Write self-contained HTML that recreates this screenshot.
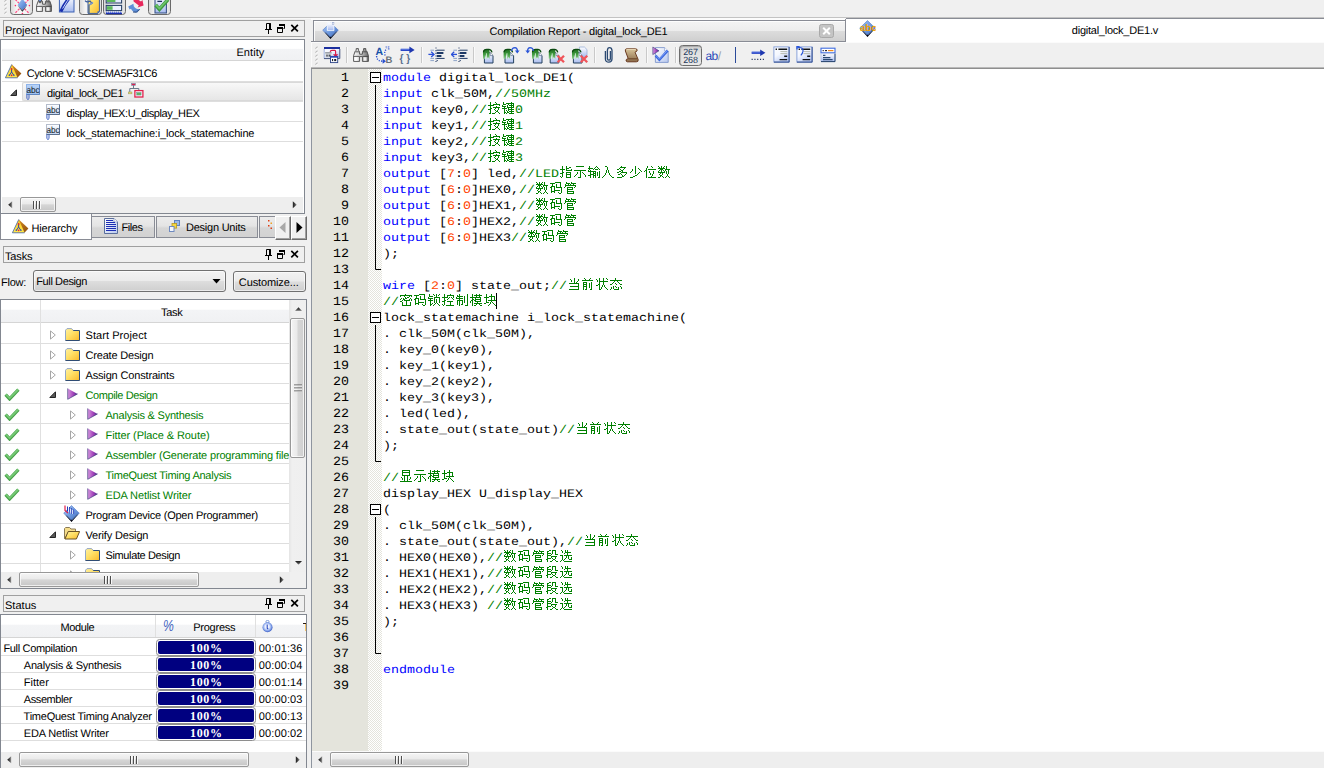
<!DOCTYPE html>
<html><head><meta charset="utf-8"><title>Quartus II</title>
<style>
html,body{margin:0;padding:0;background:#f0f0f0;}
body{width:1324px;height:768px;overflow:hidden;font-family:"Liberation Sans",sans-serif;font-size:11px;color:#000;text-rendering:geometricPrecision;}
#root{position:relative;width:1324px;height:768px;overflow:hidden;background:#f0f0f0;}
#root div,#root span.t,#root svg.i{position:absolute;box-sizing:border-box;}
.t{white-space:pre;line-height:14px;height:14px;font-size:11px;}
.hdr{background:linear-gradient(#fff 0,#fff 42%,#f3f4f6 46%,#f0f1f3 100%);border-bottom:1px solid #d5d5d5;}
.frame{border:1px solid #828790;background:#fff;}
.title{border:1px solid #a0a0a0;background:#f0f0f0;}
.sep{background:#dcdcdc;height:1px;}
.vsep{background:#e2e2e2;width:1px;}
.thumb{border:1px solid #989898;border-radius:2px;background:linear-gradient(#f5f5f5 0,#eaeaea 46%,#d6d6d6 52%,#c6c6c6 100%);box-shadow:inset 0 0 0 1px rgba(255,255,255,.7);}
.vthumb{border:1px solid #989898;border-radius:2px;background:linear-gradient(90deg,#f4f4f4 0,#e9e9e9 48%,#d6d6d6 52%,#d0d0d0 100%);box-shadow:inset 0 0 0 1px rgba(255,255,255,.7);}
.code{font-family:"Liberation Mono",monospace;font-size:13.333px;line-height:16px;height:16px;white-space:pre;transform:scaleY(.86);transform-origin:0 11px;}
.sp{display:inline-block;height:1px;}
.cjr{height:16px;white-space:nowrap;line-height:0;font-size:0;}
.k{color:#0000ff}.c{color:#008000}.n{color:#ff4500}
.cj{width:14px;height:16px;vertical-align:top;fill:#008000;display:inline-block;}
.num{font-family:"Liberation Mono",monospace;font-size:13.333px;line-height:16px;height:16px;width:37px;text-align:right;left:312px;transform:scaleY(.95);transform-origin:0 11px;}

</style></head>
<body>
<svg width="0" height="0" style="position:absolute"><defs><path id="c0" d="M2 2h1v1h-1zM7 2h1v1h-1zM2 3h1v1h-1zM8 3h1v1h-1zM2 4h1v1h-1zM5 4h7v1h-7zM0 5h6v1h-6zM11 5h1v1h-1zM2 6h1v1h-1zM8 6h1v1h-1zM2 7h1v1h-1zM5 7h7v1h-7zM2 8h2v1h-2zM7 8h1v1h-1zM10 8h1v1h-1zM0 9h3v1h-3zM6 9h1v1h-1zM10 9h1v1h-1zM2 10h1v1h-1zM7 10h1v1h-1zM9 10h1v1h-1zM2 11h1v1h-1zM8 11h2v1h-2zM2 12h1v1h-1zM7 12h1v1h-1zM10 12h1v1h-1zM1 13h2v1h-2zM4 13h3v1h-3zM11 13h1v1h-1z"/><path id="c1" d="M1 2h1v1h-1zM9 2h1v1h-1zM1 3h1v1h-1zM4 3h8v1h-8zM1 4h3v1h-3zM6 4h1v1h-1zM9 4h1v1h-1zM11 4h1v1h-1zM0 5h1v1h-1zM5 5h1v1h-1zM7 5h5v1h-5zM0 6h4v1h-4zM5 6h1v1h-1zM9 6h1v1h-1zM11 6h1v1h-1zM2 7h1v1h-1zM5 7h7v1h-7zM0 8h5v1h-5zM6 8h1v1h-1zM9 8h1v1h-1zM2 9h1v1h-1zM6 9h6v1h-6zM2 10h1v1h-1zM4 10h1v1h-1zM6 10h1v1h-1zM9 10h1v1h-1zM2 11h1v1h-1zM5 11h1v1h-1zM7 11h5v1h-5zM2 12h2v1h-2zM5 12h2v1h-2zM9 12h1v1h-1zM2 13h1v1h-1zM4 13h1v1h-1zM7 13h5v1h-5z"/><path id="c2" d="M2 2h1v1h-1zM6 2h1v1h-1zM2 3h1v1h-1zM6 3h1v1h-1zM9 3h2v1h-2zM2 4h1v1h-1zM6 4h3v1h-3zM0 5h5v1h-5zM6 5h1v1h-1zM11 5h1v1h-1zM2 6h1v1h-1zM6 6h6v1h-6zM2 7h1v1h-1zM2 8h2v1h-2zM6 8h5v1h-5zM0 9h3v1h-3zM6 9h1v1h-1zM10 9h1v1h-1zM2 10h1v1h-1zM6 10h5v1h-5zM2 11h1v1h-1zM6 11h1v1h-1zM10 11h1v1h-1zM0 12h1v1h-1zM2 12h1v1h-1zM6 12h1v1h-1zM10 12h1v1h-1zM1 13h1v1h-1zM6 13h5v1h-5z"/><path id="c3" d="M2 2h8v1h-8zM0 6h12v1h-12zM6 7h1v1h-1zM3 8h1v1h-1zM6 8h1v1h-1zM8 8h1v1h-1zM3 9h1v1h-1zM6 9h1v1h-1zM9 9h1v1h-1zM2 10h1v1h-1zM6 10h1v1h-1zM10 10h1v1h-1zM1 11h1v1h-1zM6 11h1v1h-1zM11 11h1v1h-1zM0 12h1v1h-1zM6 12h1v1h-1zM11 12h1v1h-1zM4 13h3v1h-3z"/><path id="c4" d="M1 2h1v1h-1zM8 2h1v1h-1zM1 3h1v1h-1zM7 3h1v1h-1zM9 3h1v1h-1zM0 4h5v1h-5zM6 4h1v1h-1zM10 4h1v1h-1zM1 5h1v1h-1zM5 5h1v1h-1zM7 5h3v1h-3zM11 5h1v1h-1zM0 6h1v1h-1zM2 6h1v1h-1zM0 7h8v1h-8zM11 7h1v1h-1zM2 8h1v1h-1zM5 8h1v1h-1zM7 8h1v1h-1zM9 8h1v1h-1zM11 8h1v1h-1zM2 9h1v1h-1zM5 9h3v1h-3zM9 9h1v1h-1zM11 9h1v1h-1zM2 10h4v1h-4zM7 10h1v1h-1zM9 10h1v1h-1zM11 10h1v1h-1zM0 11h3v1h-3zM5 11h3v1h-3zM9 11h1v1h-1zM11 11h1v1h-1zM2 12h1v1h-1zM5 12h1v1h-1zM7 12h1v1h-1zM11 12h1v1h-1zM2 13h1v1h-1zM5 13h1v1h-1zM7 13h1v1h-1zM10 13h2v1h-2z"/><path id="c5" d="M3 2h2v1h-2zM5 3h1v1h-1zM5 4h1v1h-1zM5 5h1v1h-1zM4 6h1v1h-1zM6 6h1v1h-1zM4 7h1v1h-1zM6 7h1v1h-1zM4 8h1v1h-1zM6 8h1v1h-1zM3 9h1v1h-1zM7 9h1v1h-1zM3 10h1v1h-1zM7 10h1v1h-1zM2 11h1v1h-1zM8 11h1v1h-1zM1 12h1v1h-1zM9 12h1v1h-1zM0 13h1v1h-1zM10 13h2v1h-2z"/><path id="c6" d="M5 2h1v1h-1zM4 3h6v1h-6zM3 4h1v1h-1zM8 4h1v1h-1zM1 5h2v1h-2zM4 5h1v1h-1zM7 5h1v1h-1zM5 6h2v1h-2zM3 7h2v1h-2zM6 7h1v1h-1zM1 8h2v1h-2zM5 8h6v1h-6zM4 9h1v1h-1zM10 9h1v1h-1zM2 10h2v1h-2zM5 10h1v1h-1zM9 10h1v1h-1zM6 11h1v1h-1zM8 11h1v1h-1zM6 12h2v1h-2zM1 13h5v1h-5z"/><path id="c7" d="M5 2h1v1h-1zM5 3h1v1h-1zM5 4h1v1h-1zM8 4h1v1h-1zM2 5h1v1h-1zM5 5h1v1h-1zM9 5h1v1h-1zM2 6h1v1h-1zM5 6h1v1h-1zM10 6h1v1h-1zM1 7h1v1h-1zM5 7h1v1h-1zM11 7h1v1h-1zM0 8h1v1h-1zM5 8h1v1h-1zM9 8h1v1h-1zM5 9h1v1h-1zM8 9h1v1h-1zM7 10h1v1h-1zM5 11h2v1h-2zM3 12h2v1h-2zM0 13h3v1h-3z"/><path id="c8" d="M3 2h1v1h-1zM7 2h1v1h-1zM3 3h1v1h-1zM8 3h1v1h-1zM2 4h1v1h-1zM2 5h1v1h-1zM4 5h8v1h-8zM1 6h2v1h-2zM0 7h1v1h-1zM2 7h1v1h-1zM5 7h1v1h-1zM9 7h1v1h-1zM2 8h1v1h-1zM5 8h1v1h-1zM9 8h1v1h-1zM2 9h1v1h-1zM6 9h1v1h-1zM9 9h1v1h-1zM2 10h1v1h-1zM6 10h1v1h-1zM8 10h1v1h-1zM2 11h1v1h-1zM8 11h1v1h-1zM2 12h1v1h-1zM7 12h1v1h-1zM2 13h1v1h-1zM4 13h8v1h-8z"/><path id="c9" d="M0 2h1v1h-1zM3 2h1v1h-1zM6 2h1v1h-1zM8 2h1v1h-1zM1 3h1v1h-1zM3 3h1v1h-1zM5 3h1v1h-1zM8 3h1v1h-1zM0 4h7v1h-7zM8 4h1v1h-1zM2 5h3v1h-3zM7 5h5v1h-5zM1 6h1v1h-1zM3 6h1v1h-1zM5 6h1v1h-1zM7 6h1v1h-1zM10 6h1v1h-1zM0 7h1v1h-1zM3 7h1v1h-1zM6 7h1v1h-1zM8 7h1v1h-1zM10 7h1v1h-1zM0 8h7v1h-7zM8 8h1v1h-1zM10 8h1v1h-1zM2 9h1v1h-1zM4 9h1v1h-1zM8 9h1v1h-1zM10 9h1v1h-1zM1 10h1v1h-1zM4 10h1v1h-1zM9 10h1v1h-1zM2 11h2v1h-2zM9 11h1v1h-1zM2 12h1v1h-1zM4 12h1v1h-1zM8 12h1v1h-1zM10 12h1v1h-1zM0 13h2v1h-2zM5 13h1v1h-1zM7 13h1v1h-1zM11 13h1v1h-1z"/><path id="c10" d="M5 2h6v1h-6zM0 3h5v1h-5zM10 3h1v1h-1zM2 4h1v1h-1zM6 4h1v1h-1zM10 4h1v1h-1zM2 5h1v1h-1zM6 5h1v1h-1zM10 5h1v1h-1zM1 6h4v1h-4zM6 6h1v1h-1zM10 6h1v1h-1zM0 7h2v1h-2zM4 7h1v1h-1zM6 7h6v1h-6zM1 8h1v1h-1zM4 8h1v1h-1zM11 8h1v1h-1zM1 9h1v1h-1zM4 9h1v1h-1zM11 9h1v1h-1zM1 10h1v1h-1zM4 10h6v1h-6zM11 10h1v1h-1zM1 11h4v1h-4zM11 11h1v1h-1zM1 12h1v1h-1zM4 12h1v1h-1zM8 12h1v1h-1zM11 12h1v1h-1zM9 13h2v1h-2z"/><path id="c11" d="M2 2h1v1h-1zM7 2h1v1h-1zM2 3h4v1h-4zM7 3h5v1h-5zM1 4h1v1h-1zM4 4h1v1h-1zM6 4h1v1h-1zM9 4h1v1h-1zM1 5h11v1h-11zM1 6h1v1h-1zM11 6h1v1h-1zM0 7h1v1h-1zM3 7h6v1h-6zM10 7h1v1h-1zM3 8h1v1h-1zM8 8h1v1h-1zM3 9h6v1h-6zM3 10h1v1h-1zM3 11h7v1h-7zM3 12h1v1h-1zM9 12h1v1h-1zM3 13h7v1h-7z"/><path id="c12" d="M6 2h1v1h-1zM2 3h1v1h-1zM6 3h1v1h-1zM10 3h1v1h-1zM3 4h1v1h-1zM6 4h1v1h-1zM10 4h1v1h-1zM3 5h1v1h-1zM6 5h1v1h-1zM9 5h1v1h-1zM6 6h1v1h-1zM8 6h1v1h-1zM1 7h10v1h-10zM10 8h1v1h-1zM10 9h1v1h-1zM2 10h9v1h-9zM10 11h1v1h-1zM10 12h1v1h-1zM1 13h10v1h-10z"/><path id="c13" d="M2 2h1v1h-1zM8 2h1v1h-1zM3 3h1v1h-1zM7 3h1v1h-1zM0 4h11v1h-11zM1 6h4v1h-4zM9 6h1v1h-1zM1 7h1v1h-1zM4 7h1v1h-1zM7 7h1v1h-1zM9 7h1v1h-1zM1 8h4v1h-4zM7 8h1v1h-1zM9 8h1v1h-1zM1 9h1v1h-1zM4 9h1v1h-1zM7 9h1v1h-1zM9 9h1v1h-1zM1 10h4v1h-4zM7 10h1v1h-1zM9 10h1v1h-1zM1 11h1v1h-1zM4 11h1v1h-1zM7 11h1v1h-1zM9 11h1v1h-1zM1 12h1v1h-1zM4 12h1v1h-1zM9 12h1v1h-1zM1 13h1v1h-1zM3 13h2v1h-2zM8 13h2v1h-2z"/><path id="c14" d="M3 2h1v1h-1zM7 2h1v1h-1zM10 2h1v1h-1zM0 3h1v1h-1zM3 3h1v1h-1zM7 3h1v1h-1zM11 3h1v1h-1zM1 4h1v1h-1zM3 4h1v1h-1zM7 4h1v1h-1zM1 5h1v1h-1zM3 5h9v1h-9zM3 6h1v1h-1zM7 6h1v1h-1zM3 7h1v1h-1zM7 7h1v1h-1zM2 8h2v1h-2zM7 8h1v1h-1zM0 9h2v1h-2zM3 9h1v1h-1zM6 9h1v1h-1zM8 9h1v1h-1zM3 10h1v1h-1zM6 10h1v1h-1zM8 10h1v1h-1zM3 11h1v1h-1zM5 11h1v1h-1zM9 11h1v1h-1zM3 12h1v1h-1zM5 12h1v1h-1zM10 12h1v1h-1zM3 13h2v1h-2zM11 13h1v1h-1z"/><path id="c15" d="M5 2h1v1h-1zM5 3h1v1h-1zM0 4h12v1h-12zM4 5h1v1h-1zM7 5h1v1h-1zM3 6h1v1h-1zM8 6h1v1h-1zM2 7h1v1h-1zM5 7h1v1h-1zM9 7h1v1h-1zM0 8h2v1h-2zM6 8h1v1h-1zM10 8h2v1h-2zM3 10h1v1h-1zM5 10h1v1h-1zM10 10h1v1h-1zM1 11h1v1h-1zM3 11h1v1h-1zM6 11h1v1h-1zM8 11h1v1h-1zM11 11h1v1h-1zM1 12h1v1h-1zM3 12h1v1h-1zM8 12h1v1h-1zM11 12h1v1h-1zM0 13h1v1h-1zM4 13h5v1h-5z"/><path id="c16" d="M5 2h1v1h-1zM0 3h12v1h-12zM0 4h1v1h-1zM4 4h1v1h-1zM9 4h1v1h-1zM11 4h1v1h-1zM5 5h1v1h-1zM7 5h2v1h-2zM1 6h1v1h-1zM3 6h1v1h-1zM5 6h2v1h-2zM10 6h1v1h-1zM0 7h1v1h-1zM3 7h2v1h-2zM9 7h1v1h-1zM11 7h1v1h-1zM2 8h1v1h-1zM4 8h6v1h-6zM11 8h1v1h-1zM0 9h2v1h-2zM6 9h1v1h-1zM2 10h1v1h-1zM6 10h1v1h-1zM10 10h1v1h-1zM2 11h1v1h-1zM6 11h1v1h-1zM10 11h1v1h-1zM2 12h1v1h-1zM6 12h1v1h-1zM10 12h1v1h-1zM2 13h9v1h-9z"/><path id="c17" d="M1 2h1v1h-1zM5 2h1v1h-1zM8 2h1v1h-1zM11 2h1v1h-1zM1 3h1v1h-1zM6 3h1v1h-1zM8 3h1v1h-1zM10 3h1v1h-1zM1 4h4v1h-4zM8 4h1v1h-1zM0 5h1v1h-1zM6 5h6v1h-6zM0 6h5v1h-5zM6 6h1v1h-1zM11 6h1v1h-1zM2 7h1v1h-1zM6 7h1v1h-1zM8 7h1v1h-1zM11 7h1v1h-1zM0 8h5v1h-5zM6 8h1v1h-1zM8 8h1v1h-1zM11 8h1v1h-1zM2 9h1v1h-1zM6 9h1v1h-1zM8 9h1v1h-1zM11 9h1v1h-1zM2 10h1v1h-1zM6 10h1v1h-1zM8 10h1v1h-1zM11 10h1v1h-1zM2 11h1v1h-1zM4 11h1v1h-1zM7 11h1v1h-1zM9 11h1v1h-1zM2 12h2v1h-2zM6 12h1v1h-1zM10 12h1v1h-1zM2 13h1v1h-1zM5 13h1v1h-1zM11 13h1v1h-1z"/><path id="c18" d="M2 2h1v1h-1zM8 2h1v1h-1zM2 3h1v1h-1zM5 3h7v1h-7zM2 4h1v1h-1zM5 4h1v1h-1zM11 4h1v1h-1zM0 5h6v1h-6zM7 5h1v1h-1zM9 5h1v1h-1zM11 5h1v1h-1zM2 6h1v1h-1zM6 6h1v1h-1zM10 6h1v1h-1zM2 7h1v1h-1zM5 7h1v1h-1zM11 7h1v1h-1zM2 8h2v1h-2zM0 9h3v1h-3zM5 9h6v1h-6zM2 10h1v1h-1zM8 10h1v1h-1zM2 11h1v1h-1zM8 11h1v1h-1zM0 12h1v1h-1zM2 12h1v1h-1zM8 12h1v1h-1zM1 13h1v1h-1zM4 13h8v1h-8z"/><path id="c19" d="M3 2h1v1h-1zM11 2h1v1h-1zM1 3h1v1h-1zM3 3h1v1h-1zM11 3h1v1h-1zM1 4h6v1h-6zM8 4h1v1h-1zM11 4h1v1h-1zM0 5h1v1h-1zM3 5h1v1h-1zM8 5h1v1h-1zM11 5h1v1h-1zM0 6h7v1h-7zM8 6h1v1h-1zM11 6h1v1h-1zM3 7h1v1h-1zM8 7h1v1h-1zM11 7h1v1h-1zM1 8h6v1h-6zM8 8h1v1h-1zM11 8h1v1h-1zM1 9h1v1h-1zM3 9h1v1h-1zM6 9h1v1h-1zM8 9h1v1h-1zM11 9h1v1h-1zM1 10h1v1h-1zM3 10h1v1h-1zM6 10h1v1h-1zM8 10h1v1h-1zM11 10h1v1h-1zM1 11h1v1h-1zM3 11h1v1h-1zM6 11h1v1h-1zM11 11h1v1h-1zM1 12h1v1h-1zM3 12h1v1h-1zM5 12h2v1h-2zM11 12h1v1h-1zM3 13h1v1h-1zM9 13h3v1h-3z"/><path id="c20" d="M2 2h1v1h-1zM6 2h1v1h-1zM9 2h1v1h-1zM2 3h1v1h-1zM4 3h8v1h-8zM2 4h1v1h-1zM6 4h1v1h-1zM9 4h1v1h-1zM0 5h11v1h-11zM2 6h1v1h-1zM5 6h1v1h-1zM10 6h1v1h-1zM2 7h2v1h-2zM5 7h6v1h-6zM1 8h2v1h-2zM4 8h2v1h-2zM10 8h1v1h-1zM0 9h1v1h-1zM2 9h1v1h-1zM5 9h6v1h-6zM0 10h1v1h-1zM2 10h1v1h-1zM7 10h1v1h-1zM2 11h1v1h-1zM4 11h8v1h-8zM2 12h1v1h-1zM6 12h1v1h-1zM9 12h1v1h-1zM2 13h1v1h-1zM4 13h2v1h-2zM10 13h2v1h-2z"/><path id="c21" d="M2 2h1v1h-1zM7 2h1v1h-1zM2 3h1v1h-1zM7 3h1v1h-1zM2 4h1v1h-1zM5 4h6v1h-6zM0 5h5v1h-5zM7 5h1v1h-1zM10 5h1v1h-1zM2 6h1v1h-1zM7 6h1v1h-1zM10 6h1v1h-1zM2 7h1v1h-1zM7 7h1v1h-1zM10 7h1v1h-1zM2 8h1v1h-1zM4 8h8v1h-8zM2 9h1v1h-1zM7 9h1v1h-1zM2 10h3v1h-3zM6 10h1v1h-1zM8 10h1v1h-1zM0 11h2v1h-2zM6 11h1v1h-1zM9 11h1v1h-1zM5 12h1v1h-1zM10 12h1v1h-1zM4 13h1v1h-1zM11 13h1v1h-1z"/><path id="c22" d="M2 2h8v1h-8zM2 3h1v1h-1zM9 3h1v1h-1zM2 4h8v1h-8zM2 5h1v1h-1zM9 5h1v1h-1zM2 6h1v1h-1zM9 6h1v1h-1zM2 7h8v1h-8zM4 8h1v1h-1zM7 8h1v1h-1zM1 9h1v1h-1zM4 9h1v1h-1zM7 9h1v1h-1zM10 9h1v1h-1zM2 10h1v1h-1zM4 10h1v1h-1zM7 10h1v1h-1zM10 10h1v1h-1zM2 11h1v1h-1zM4 11h1v1h-1zM7 11h1v1h-1zM9 11h1v1h-1zM4 12h1v1h-1zM7 12h1v1h-1zM0 13h12v1h-12z"/><path id="c23" d="M3 2h2v1h-2zM6 2h4v1h-4zM1 3h2v1h-2zM6 3h1v1h-1zM9 3h1v1h-1zM1 4h1v1h-1zM6 4h1v1h-1zM9 4h1v1h-1zM1 5h4v1h-4zM6 5h1v1h-1zM9 5h1v1h-1zM1 6h1v1h-1zM5 6h1v1h-1zM9 6h3v1h-3zM1 7h4v1h-4zM1 8h1v1h-1zM5 8h6v1h-6zM1 9h1v1h-1zM5 9h1v1h-1zM9 9h1v1h-1zM1 10h4v1h-4zM6 10h1v1h-1zM9 10h1v1h-1zM0 11h2v1h-2zM7 11h2v1h-2zM1 12h1v1h-1zM6 12h1v1h-1zM9 12h1v1h-1zM1 13h1v1h-1zM4 13h2v1h-2zM10 13h2v1h-2z"/><path id="c24" d="M1 2h1v1h-1zM5 2h1v1h-1zM7 2h1v1h-1zM2 3h1v1h-1zM5 3h1v1h-1zM7 3h1v1h-1zM2 4h1v1h-1zM5 4h6v1h-6zM4 5h1v1h-1zM7 5h1v1h-1zM7 6h1v1h-1zM0 7h3v1h-3zM4 7h8v1h-8zM2 8h1v1h-1zM6 8h1v1h-1zM8 8h1v1h-1zM2 9h1v1h-1zM6 9h1v1h-1zM8 9h1v1h-1zM11 9h1v1h-1zM2 10h1v1h-1zM5 10h1v1h-1zM8 10h1v1h-1zM11 10h1v1h-1zM2 11h1v1h-1zM4 11h1v1h-1zM9 11h3v1h-3zM1 12h1v1h-1zM3 12h1v1h-1zM0 13h1v1h-1zM4 13h8v1h-8z"/></defs></svg><svg width="0" height="0" style="position:absolute"><defs><linearGradient id="gFold" x1="0" y1="0" x2="1" y2="1"><stop offset="0" stop-color="#fff0a0"/><stop offset=".45" stop-color="#ffe066"/><stop offset="1" stop-color="#f9b82a"/></linearGradient><linearGradient id="gPlay" x1="0" y1="0" x2="1" y2="0"><stop offset="0" stop-color="#d79ae0"/><stop offset=".55" stop-color="#a444bb"/><stop offset="1" stop-color="#4a2a8a"/></linearGradient><linearGradient id="gDia" x1="0" y1="0" x2="1" y2="1"><stop offset="0" stop-color="#a9c6f2"/><stop offset=".5" stop-color="#6f9be0"/><stop offset="1" stop-color="#3c66b8"/></linearGradient><linearGradient id="gDoc" x1="0" y1="0" x2="1" y2="1"><stop offset="0" stop-color="#ffffff"/><stop offset="1" stop-color="#b8c8ee"/></linearGradient><linearGradient id="gBm" x1="0" y1="0" x2="0" y2="1"><stop offset="0" stop-color="#1c6a1c"/><stop offset=".5" stop-color="#3f9a3f"/><stop offset="1" stop-color="#9ad49a"/></linearGradient><linearGradient id="gPyr" x1="0" y1="0" x2="0" y2="1"><stop offset="0" stop-color="#f7c520"/><stop offset="1" stop-color="#ffe94d"/></linearGradient><linearGradient id="gPyr2" x1="0" y1="0" x2="1" y2="1"><stop offset="0" stop-color="#e89a20"/><stop offset="1" stop-color="#8a4a10"/></linearGradient><linearGradient id="gAbcS" x1="0" y1="0" x2="0" y2="1"><stop offset="0" stop-color="#b9d3f7"/><stop offset="1" stop-color="#9cc0f0"/></linearGradient><linearGradient id="gAbc" x1="0" y1="0" x2="0" y2="1"><stop offset="0" stop-color="#ffffff"/><stop offset="1" stop-color="#c4d6f2"/></linearGradient><radialGradient id="gClk" cx=".47" cy=".45" r=".56"><stop offset="0" stop-color="#ffffff"/><stop offset=".38" stop-color="#e6edff"/><stop offset=".72" stop-color="#86a4ea"/><stop offset="1" stop-color="#3558c0"/></radialGradient><linearGradient id="gBin" x1="0" y1="0" x2="1" y2="0"><stop offset="0" stop-color="#fafafa"/><stop offset=".5" stop-color="#c8c8c8"/><stop offset="1" stop-color="#6a6a6a"/></linearGradient><linearGradient id="gScr" x1="0" y1="0" x2="0" y2="1"><stop offset="0" stop-color="#d8c49a"/><stop offset="1" stop-color="#8a6a48"/></linearGradient><linearGradient id="gBlu" x1="0" y1="0" x2="0" y2="1"><stop offset="0" stop-color="#ffffff"/><stop offset="1" stop-color="#a8bcf0"/></linearGradient><linearGradient id="gLn" x1="0" y1="0" x2="0.6" y2="1"><stop offset="0" stop-color="#ffffff"/><stop offset=".5" stop-color="#f4f7ff"/><stop offset="1" stop-color="#b9c9f4"/></linearGradient><linearGradient id="gArL" x1="0" y1="0" x2="1" y2="0"><stop offset="0" stop-color="#1a1a1a"/><stop offset=".5" stop-color="#3c3c3c"/><stop offset="1" stop-color="#9a9a9a"/></linearGradient><linearGradient id="gArR" x1="0" y1="0" x2="1" y2="0"><stop offset="0" stop-color="#1a1a1a"/><stop offset=".5" stop-color="#4a4a4a"/><stop offset="1" stop-color="#9a9a9a"/></linearGradient><linearGradient id="gArD" x1="0" y1="0" x2="0" y2="1"><stop offset="0" stop-color="#1a1a1a"/><stop offset=".6" stop-color="#4a4a4a"/><stop offset="1" stop-color="#a0a0a0"/></linearGradient></defs></svg>
<div id="root">
<div style="left:0px;top:17px;width:1324px;height:1px;background:#c3c3c3"></div>
<div style="left:0px;top:18px;width:1324px;height:1px;background:#f8f8f8"></div>
<div style="left:311px;top:18px;width:534px;height:2px;background:#fcfcfc"></div>
<div class="title" style="left:3px;top:20px;width:302px;height:17px;"></div>
<span class="t" style="left:5px;top:24px;letter-spacing:-0.022px;">Project Navigator</span>
<svg class="i" style="left:264px;top:23px" width="38" height="12" viewBox="0 0 38 12"><path d="M2.5 0.5h4v6h-4z M1 6.5h7 M4.5 7v4" fill="none" stroke="#000" stroke-width="1"/><path d="M6 0.5v6" stroke="#000" stroke-width="2"/><path d="M15.5 1.5h5v4h-1" fill="none" stroke="#000" stroke-width="1"/><path d="M15 1h6v2h-6z" fill="#000"/><path d="M13.5 4.5h5v5h-5z" fill="#f0f0f0" stroke="#000" stroke-width="1"/><path d="M13 4h6v2h-6z" fill="#000"/><path d="M27.3 1.8l6.6 6.6 M33.9 1.8l-6.6 6.6" fill="none" stroke="#000" stroke-width="1.7"/></svg>
<div class="frame" style="left:0px;top:39px;width:305px;height:175px;"></div>
<div class="hdr" style="left:2px;top:40px;width:301px;height:21px;"></div>
<span class="t" style="left:236.4px;top:46px;letter-spacing:0.082px;">Entity</span>
<div style="left:2px;top:81px;width:301px;height:1px;background:#dedede"></div>
<div style="left:2px;top:101px;width:301px;height:1px;background:#dedede"></div>
<div style="left:2px;top:121px;width:301px;height:1px;background:#dedede"></div>
<div style="left:2px;top:141px;width:301px;height:1px;background:#dedede"></div>
<div style="left:22px;top:82px;width:281px;height:19px;background:linear-gradient(#f8f8f8,#e6e6e6);border:1px solid #d9d9d9;border-right:none;border-radius:2px 0 0 2px"></div>
<span class="t" style="left:26.8px;top:67px;letter-spacing:-0.435px;">Cyclone V: 5CSEMA5F31C6</span>
<span class="t" style="left:46.9px;top:87px;letter-spacing:-0.346px;">digital_lock_DE1</span>
<span class="t" style="left:66.5px;top:107px;letter-spacing:-0.403px;">display_HEX:U_display_HEX</span>
<span class="t" style="left:66.5px;top:127px;letter-spacing:-0.163px;">lock_statemachine:i_lock_statemachine</span>
<div style="left:2px;top:197px;width:301px;height:16px;background:#eeeeee"></div>
<svg class="i" style="left:8px;top:201px" width="5" height="8" viewBox="0 0 5 8"><path d="M4.2 0.3V7.3L0.2 3.8Z" fill="url(#gArL)"/></svg>
<svg class="i" style="left:292px;top:201px" width="5" height="8" viewBox="0 0 5 8"><path d="M0.8 0.3V7.3L4.8 3.8Z" fill="url(#gArR)"/></svg>
<div class="thumb" style="left:20px;top:197px;width:36px;height:15px;"></div>
<svg class="i" style="left:33px;top:201px" width="9" height="8" viewBox="0 0 9 8"><path d="M0.5 0v8M3.5 0v8M6.5 0v8" stroke="#4e4e4e" stroke-width="1"/><path d="M1.5 0v8M4.5 0v8M7.5 0v8" stroke="#fff" stroke-width="1" opacity=".85"/></svg>
<div style="left:0px;top:214px;width:92px;height:26px;background:#fff;border:1px solid #898c95;border-top:none"></div>
<span class="t" style="left:31.4px;top:222px;letter-spacing:-0.129px;">Hierarchy</span>
<div style="left:92px;top:216px;width:63px;height:22px;background:linear-gradient(#ececec 0,#e4e4e4 45%,#d6d6d6 55%,#d2d2d2 100%);border:1px solid #898c95;border-left:none;border-left:none"></div>
<span class="t" style="left:121.5px;top:221px;letter-spacing:-0.425px;">Files</span>
<div style="left:156px;top:216px;width:102px;height:22px;background:linear-gradient(#ececec 0,#e4e4e4 45%,#d6d6d6 55%,#d2d2d2 100%);border:1px solid #898c95;border-left:none;border-left:1px solid #898c95"></div>
<span class="t" style="left:186px;top:221px;letter-spacing:-0.238px;">Design Units</span>
<div style="left:259px;top:216px;width:30px;height:22px;background:linear-gradient(#ececec 0,#e4e4e4 45%,#d6d6d6 55%,#d2d2d2 100%);border:1px solid #898c95;border-left:none;border-left:1px solid #898c95"></div>
<div style="left:275px;top:216px;width:16px;height:24px;background:#f0f0f0;border:1px solid;border-color:#fff #6d6d6d #6d6d6d #fff;box-shadow:inset -1px -1px 0 #a0a0a0;"></div>
<div style="left:291px;top:216px;width:16px;height:24px;background:#f0f0f0;border:1px solid;border-color:#fff #6d6d6d #6d6d6d #fff;box-shadow:inset -1px -1px 0 #a0a0a0;"></div>
<svg class="i" style="left:279px;top:222px" width="7" height="11" viewBox="0 0 7 11"><path d="M6.5 0v11L0.5 5.5z" fill="#a8a8a8"/></svg>
<svg class="i" style="left:296px;top:222px" width="7" height="11" viewBox="0 0 7 11"><path d="M0.5 0v11L6.5 5.5z" fill="#000"/></svg>
<div class="title" style="left:3px;top:246px;width:302px;height:17px;"></div>
<span class="t" style="left:5px;top:250px;letter-spacing:-0.143px;">Tasks</span>
<svg class="i" style="left:264px;top:249px" width="38" height="12" viewBox="0 0 38 12"><path d="M2.5 0.5h4v6h-4z M1 6.5h7 M4.5 7v4" fill="none" stroke="#000" stroke-width="1"/><path d="M6 0.5v6" stroke="#000" stroke-width="2"/><path d="M15.5 1.5h5v4h-1" fill="none" stroke="#000" stroke-width="1"/><path d="M15 1h6v2h-6z" fill="#000"/><path d="M13.5 4.5h5v5h-5z" fill="#f0f0f0" stroke="#000" stroke-width="1"/><path d="M13 4h6v2h-6z" fill="#000"/><path d="M27.3 1.8l6.6 6.6 M33.9 1.8l-6.6 6.6" fill="none" stroke="#000" stroke-width="1.7"/></svg>
<span class="t" style="left:1px;top:276px;letter-spacing:-0.256px;">Flow:</span>
<div style="left:33px;top:270px;width:193px;height:22px;border:1px solid #707070;border-radius:3px;background:linear-gradient(#f2f2f2 0,#ebebeb 48%,#dddddd 52%,#cfcfcf 100%);box-shadow:inset 0 0 0 1px rgba(255,255,255,.6)"></div>
<span class="t" style="left:36.3px;top:275px;letter-spacing:-0.393px;">Full Design</span>
<svg class="i" style="left:212px;top:279px" width="9" height="5" viewBox="0 0 9 5"><path d="M0.5 0h8L4.5 4.6z" fill="#000"/></svg>
<div style="left:233px;top:271px;width:73px;height:21px;border:1px solid #707070;border-radius:3px;background:linear-gradient(#f2f2f2 0,#ebebeb 48%,#dddddd 52%,#cfcfcf 100%);box-shadow:inset 0 0 0 1px rgba(255,255,255,.6)"></div>
<span class="t" style="left:238.8px;top:276px;letter-spacing:-0.111px;">Customize...</span>
<div class="frame" style="left:0px;top:299px;width:307px;height:290px;"></div>
<div class="hdr" style="left:1px;top:300px;width:288px;height:23px;"></div>
<span class="t" style="left:160.9px;top:306px;letter-spacing:-0.229px;">Task</span>
<div style="left:40px;top:300px;width:1px;height:272px;background:#e0e0e0"></div>
<div style="left:1px;top:343px;width:288px;height:1px;background:#dedede"></div>
<div style="left:1px;top:363px;width:288px;height:1px;background:#dedede"></div>
<div style="left:1px;top:383px;width:288px;height:1px;background:#dedede"></div>
<div style="left:1px;top:403px;width:288px;height:1px;background:#dedede"></div>
<div style="left:1px;top:423px;width:288px;height:1px;background:#dedede"></div>
<div style="left:1px;top:443px;width:288px;height:1px;background:#dedede"></div>
<div style="left:1px;top:463px;width:288px;height:1px;background:#dedede"></div>
<div style="left:1px;top:483px;width:288px;height:1px;background:#dedede"></div>
<div style="left:1px;top:503px;width:288px;height:1px;background:#dedede"></div>
<div style="left:1px;top:523px;width:288px;height:1px;background:#dedede"></div>
<div style="left:1px;top:543px;width:288px;height:1px;background:#dedede"></div>
<div style="left:1px;top:563px;width:288px;height:1px;background:#dedede"></div>
<span class="t" style="left:85.5px;top:329px;letter-spacing:0.060px;">Start Project</span>
<span class="t" style="left:85.5px;top:349px;letter-spacing:-0.193px;">Create Design</span>
<span class="t" style="left:85.5px;top:369px;letter-spacing:-0.161px;">Assign Constraints</span>
<span class="t" style="left:85.5px;top:389px;letter-spacing:-0.403px;color:#008000;">Compile Design</span>
<span class="t" style="left:105.5px;top:409px;letter-spacing:-0.215px;color:#008000;">Analysis &amp; Synthesis</span>
<span class="t" style="left:105.5px;top:429px;letter-spacing:-0.080px;color:#008000;">Fitter (Place &amp; Route)</span>
<span class="t" style="left:105.5px;top:469px;letter-spacing:-0.258px;color:#008000;">TimeQuest Timing Analysis</span>
<span class="t" style="left:105.5px;top:489px;letter-spacing:-0.112px;color:#008000;">EDA Netlist Writer</span>
<span class="t" style="left:85.5px;top:509px;letter-spacing:-0.244px;">Program Device (Open Programmer)</span>
<span class="t" style="left:85.5px;top:529px;letter-spacing:-0.154px;">Verify Design</span>
<span class="t" style="left:105.5px;top:549px;letter-spacing:-0.373px;">Simulate Design</span>
<div style="left:100px;top:444px;width:189px;height:19px;overflow:hidden">
<span class="t" style="left:5.5px;top:5px;letter-spacing:-0.159px;color:#008000;">Assembler (Generate programming files)</span>
</div>
<div style="left:41px;top:564px;width:248px;height:8px;overflow:hidden">
<span class="t" style="left:64.5px;top:6px;letter-spacing:-0.101px;">Gate Level Simulation</span>
</div>
<div style="left:289px;top:300px;width:17px;height:272px;background:linear-gradient(90deg,#e4e4e4,#f0f0f0 3px,#efefef)"></div>
<svg class="i" style="left:295px;top:307px" width="7" height="4" viewBox="0 0 7 4"><path d="M0 4h7L3.5 0.2z" fill="url(#gArD)"/></svg>
<svg class="i" style="left:295px;top:561px" width="7" height="4" viewBox="0 0 7 4"><path d="M0 0h7L3.5 3.8z" fill="url(#gArD)"/></svg>
<div class="vthumb" style="left:290px;top:318px;width:15px;height:140px;"></div>
<svg class="i" style="left:294px;top:384px" width="8" height="8" viewBox="0 0 8 8"><path d="M0 1h8M0 4h8M0 7h8" stroke="#555" stroke-width="1"/><path d="M0 2h8M0 5h8M0 8h8" stroke="#fff" stroke-width="1" opacity=".8"/></svg>
<div style="left:1px;top:572px;width:289px;height:16px;background:#eeeeee"></div>
<svg class="i" style="left:7px;top:576px" width="5" height="8" viewBox="0 0 5 8"><path d="M4.2 0.3V7.3L0.2 3.8Z" fill="url(#gArL)"/></svg>
<svg class="i" style="left:279px;top:576px" width="5" height="8" viewBox="0 0 5 8"><path d="M0.8 0.3V7.3L4.8 3.8Z" fill="url(#gArR)"/></svg>
<div class="thumb" style="left:19px;top:572px;width:180px;height:15px;"></div>
<svg class="i" style="left:104px;top:576px" width="9" height="8" viewBox="0 0 9 8"><path d="M0.5 0v8M3.5 0v8M6.5 0v8" stroke="#4e4e4e" stroke-width="1"/><path d="M1.5 0v8M4.5 0v8M7.5 0v8" stroke="#fff" stroke-width="1" opacity=".85"/></svg>
<div style="left:290px;top:572px;width:16px;height:16px;background:#f0f0f0"></div>
<div class="title" style="left:3px;top:595px;width:302px;height:17px;"></div>
<span class="t" style="left:5px;top:599px;letter-spacing:0.019px;">Status</span>
<svg class="i" style="left:264px;top:598px" width="38" height="12" viewBox="0 0 38 12"><path d="M2.5 0.5h4v6h-4z M1 6.5h7 M4.5 7v4" fill="none" stroke="#000" stroke-width="1"/><path d="M6 0.5v6" stroke="#000" stroke-width="2"/><path d="M15.5 1.5h5v4h-1" fill="none" stroke="#000" stroke-width="1"/><path d="M15 1h6v2h-6z" fill="#000"/><path d="M13.5 4.5h5v5h-5z" fill="#f0f0f0" stroke="#000" stroke-width="1"/><path d="M13 4h6v2h-6z" fill="#000"/><path d="M27.3 1.8l6.6 6.6 M33.9 1.8l-6.6 6.6" fill="none" stroke="#000" stroke-width="1.7"/></svg>
<div class="frame" style="left:0px;top:614px;width:307px;height:160px;"></div>
<div class="hdr" style="left:1px;top:615px;width:305px;height:23px;"></div>
<div style="left:155px;top:615px;width:1px;height:22px;background:#e0e0e0"></div>
<div style="left:255px;top:615px;width:1px;height:22px;background:#e0e0e0"></div>
<span class="t" style="left:60.4px;top:621px;letter-spacing:-0.363px;">Module</span>
<span class="t" style="left:193.3px;top:621px;letter-spacing:-0.264px;">Progress</span>
<div style="left:303px;top:623px;width:3px;height:1px;background:#2a1a10"></div>
<div style="left:305px;top:624px;width:1px;height:7px;background:#f6c468"></div>
<div style="left:1px;top:655px;width:305px;height:1px;background:#dedede"></div>
<span class="t" style="left:3.4px;top:642px;letter-spacing:-0.329px;">Full Compilation</span>
<span class="t" style="left:258.8px;top:642px;letter-spacing:0.123px;">00:01:36</span>
<div style="left:156px;top:639px;width:100px;height:17px;border:1px solid #8e8e8e;border-radius:3.5px;background:#fff"></div>
<div style="left:158px;top:641px;width:96px;height:13px;background:#000080;border-radius:2px"></div>
<span class="t" style="left:157px;width:98px;text-align:center;top:641px;color:#fff;font-family:'Liberation Serif',serif;font-weight:bold;font-size:12px;letter-spacing:0.7px;text-indent:.7px">100%</span>
<div style="left:1px;top:672px;width:305px;height:1px;background:#dedede"></div>
<span class="t" style="left:23.8px;top:659px;letter-spacing:-0.230px;">Analysis &amp; Synthesis</span>
<span class="t" style="left:258.8px;top:659px;letter-spacing:0.123px;">00:00:04</span>
<div style="left:156px;top:656px;width:100px;height:17px;border:1px solid #8e8e8e;border-radius:3.5px;background:#fff"></div>
<div style="left:158px;top:658px;width:96px;height:13px;background:#000080;border-radius:2px"></div>
<span class="t" style="left:157px;width:98px;text-align:center;top:658px;color:#fff;font-family:'Liberation Serif',serif;font-weight:bold;font-size:12px;letter-spacing:0.7px;text-indent:.7px">100%</span>
<div style="left:1px;top:689px;width:305px;height:1px;background:#dedede"></div>
<span class="t" style="left:23.8px;top:676px;letter-spacing:-0.009px;">Fitter</span>
<span class="t" style="left:258.8px;top:676px;letter-spacing:0.123px;">00:01:14</span>
<div style="left:156px;top:673px;width:100px;height:17px;border:1px solid #8e8e8e;border-radius:3.5px;background:#fff"></div>
<div style="left:158px;top:675px;width:96px;height:13px;background:#000080;border-radius:2px"></div>
<span class="t" style="left:157px;width:98px;text-align:center;top:675px;color:#fff;font-family:'Liberation Serif',serif;font-weight:bold;font-size:12px;letter-spacing:0.7px;text-indent:.7px">100%</span>
<div style="left:1px;top:706px;width:305px;height:1px;background:#dedede"></div>
<span class="t" style="left:23.8px;top:693px;letter-spacing:-0.418px;">Assembler</span>
<span class="t" style="left:258.8px;top:693px;letter-spacing:0.123px;">00:00:03</span>
<div style="left:156px;top:690px;width:100px;height:17px;border:1px solid #8e8e8e;border-radius:3.5px;background:#fff"></div>
<div style="left:158px;top:692px;width:96px;height:13px;background:#000080;border-radius:2px"></div>
<span class="t" style="left:157px;width:98px;text-align:center;top:692px;color:#fff;font-family:'Liberation Serif',serif;font-weight:bold;font-size:12px;letter-spacing:0.7px;text-indent:.7px">100%</span>
<div style="left:1px;top:723px;width:305px;height:1px;background:#dedede"></div>
<span class="t" style="left:23.6px;top:710px;letter-spacing:-0.239px;">TimeQuest Timing Analyzer</span>
<span class="t" style="left:258.8px;top:710px;letter-spacing:0.123px;">00:00:13</span>
<div style="left:156px;top:707px;width:100px;height:17px;border:1px solid #8e8e8e;border-radius:3.5px;background:#fff"></div>
<div style="left:158px;top:709px;width:96px;height:13px;background:#000080;border-radius:2px"></div>
<span class="t" style="left:157px;width:98px;text-align:center;top:709px;color:#fff;font-family:'Liberation Serif',serif;font-weight:bold;font-size:12px;letter-spacing:0.7px;text-indent:.7px">100%</span>
<div style="left:1px;top:740px;width:305px;height:1px;background:#dedede"></div>
<span class="t" style="left:23.8px;top:727px;letter-spacing:-0.156px;">EDA Netlist Writer</span>
<span class="t" style="left:258.8px;top:727px;letter-spacing:0.123px;">00:00:02</span>
<div style="left:156px;top:724px;width:100px;height:17px;border:1px solid #8e8e8e;border-radius:3.5px;background:#fff"></div>
<div style="left:158px;top:726px;width:96px;height:13px;background:#000080;border-radius:2px"></div>
<span class="t" style="left:157px;width:98px;text-align:center;top:726px;color:#fff;font-family:'Liberation Serif',serif;font-weight:bold;font-size:12px;letter-spacing:0.7px;text-indent:.7px">100%</span>
<div style="left:1px;top:752px;width:305px;height:16px;background:#eeeeee"></div>
<svg class="i" style="left:7px;top:756px" width="5" height="8" viewBox="0 0 5 8"><path d="M4.2 0.3V7.3L0.2 3.8Z" fill="url(#gArL)"/></svg>
<svg class="i" style="left:295px;top:756px" width="5" height="8" viewBox="0 0 5 8"><path d="M0.8 0.3V7.3L4.8 3.8Z" fill="url(#gArR)"/></svg>
<div class="thumb" style="left:19px;top:752px;width:230px;height:15px;"></div>
<svg class="i" style="left:130px;top:756px" width="9" height="8" viewBox="0 0 9 8"><path d="M0.5 0v8M3.5 0v8M6.5 0v8" stroke="#4e4e4e" stroke-width="1"/><path d="M1.5 0v8M4.5 0v8M7.5 0v8" stroke="#fff" stroke-width="1" opacity=".85"/></svg>
<div style="left:846px;top:18px;width:478px;height:1px;background:#898c95"></div>
<div style="left:846px;top:19px;width:478px;height:24px;background:#fff"></div>
<div style="left:845px;top:19px;width:1px;height:23px;background:#898c95"></div>
<div style="left:313px;top:20px;width:533px;height:22px;border:1px solid #898c95;border-bottom:none;background:linear-gradient(#f4f4f4 0,#ededed 45%,#dcdcdc 50%,#cecece 100%);box-shadow:inset 0 1px 0 #fdfdfd,inset 1px 0 0 #fafafa"></div>
<div style="left:311px;top:41px;width:535px;height:1px;background:#898c95"></div>
<span class="t" style="left:489.5px;top:25px;letter-spacing:-0.212px;">Compilation Report - digital_lock_DE1</span>
<span class="t" style="left:1071.8px;top:24px;letter-spacing:-0.238px;">digital_lock_DE1.v</span>
<div style="left:819px;top:24px;width:15px;height:14px;border:1px solid #a9a9a9;border-radius:2.5px;background:#c4c4c4"></div>
<svg class="i" style="left:822px;top:27px" width="9" height="8" viewBox="0 0 9 8"><path d="M1.2 0.8l6.6 6.4M7.8 0.8l-6.6 6.4" stroke="#fff" stroke-width="2" fill="none"/></svg>
<div style="left:311px;top:42px;width:1013px;height:1px;background:#fbfbfb"></div>
<div style="left:311px;top:43px;width:1px;height:24px;background:#fbfbfb"></div>
<div style="left:311px;top:67px;width:1013px;height:1px;background:#b9b9b9"></div>
<div style="left:311px;top:68px;width:1013px;height:1px;background:#8e8e8e"></div>
<div style="left:311px;top:69px;width:1px;height:699px;background:#8e959f"></div>
<div style="left:346px;top:47px;width:1px;height:16px;background:#c9c9c9"></div>
<div style="left:347px;top:47px;width:1px;height:16px;background:#fafafa"></div>
<div style="left:421px;top:47px;width:1px;height:16px;background:#c9c9c9"></div>
<div style="left:422px;top:47px;width:1px;height:16px;background:#fafafa"></div>
<div style="left:473px;top:47px;width:1px;height:16px;background:#c9c9c9"></div>
<div style="left:474px;top:47px;width:1px;height:16px;background:#fafafa"></div>
<div style="left:594px;top:47px;width:1px;height:16px;background:#c9c9c9"></div>
<div style="left:595px;top:47px;width:1px;height:16px;background:#fafafa"></div>
<div style="left:646px;top:47px;width:1px;height:16px;background:#c9c9c9"></div>
<div style="left:647px;top:47px;width:1px;height:16px;background:#fafafa"></div>
<div style="left:675px;top:47px;width:1px;height:16px;background:#c9c9c9"></div>
<div style="left:676px;top:47px;width:1px;height:16px;background:#fafafa"></div>
<div style="left:312px;top:69px;width:1012px;height:682px;background:#fff"></div>
<div style="left:312px;top:69px;width:56px;height:682px;background:#e4e4dc"></div>
<div style="left:368px;top:69px;width:14px;height:682px;background-color:#fff;background-image:linear-gradient(45deg,#e4e4dc 25%,transparent 25%,transparent 75%,#e4e4dc 75%),linear-gradient(45deg,#e4e4dc 25%,transparent 25%,transparent 75%,#e4e4dc 75%);background-size:2px 2px;background-position:0 0,1px 1px"></div>
<div class="num" style="top:71px">1</div>
<div class="code" style="left:383px;top:71px"><span class="k">module</span> digital_lock_DE1(</div>
<div class="num" style="top:87px">2</div>
<div class="code" style="left:383px;top:87px"><span class="k">input</span> clk_50M,<span class="c">//50MHz</span></div>
<div class="num" style="top:103px">3</div>
<div class="code" style="left:383px;top:103px"><span class="k">input</span> key0,<span class="c">//</span><span class="sp" style="width:28px"></span><span class="c">0</span></div>
<div class="cjr" role="img" aria-label="按键" style="left:487px;top:102px"><svg class="cj" viewBox="-1 2 14 16" shape-rendering="crispEdges"><use href="#c0"/></svg><svg class="cj" viewBox="-1 2 14 16" shape-rendering="crispEdges"><use href="#c1"/></svg></div>
<div class="num" style="top:119px">4</div>
<div class="code" style="left:383px;top:119px"><span class="k">input</span> key1,<span class="c">//</span><span class="sp" style="width:28px"></span><span class="c">1</span></div>
<div class="cjr" role="img" aria-label="按键" style="left:487px;top:118px"><svg class="cj" viewBox="-1 2 14 16" shape-rendering="crispEdges"><use href="#c0"/></svg><svg class="cj" viewBox="-1 2 14 16" shape-rendering="crispEdges"><use href="#c1"/></svg></div>
<div class="num" style="top:135px">5</div>
<div class="code" style="left:383px;top:135px"><span class="k">input</span> key2,<span class="c">//</span><span class="sp" style="width:28px"></span><span class="c">2</span></div>
<div class="cjr" role="img" aria-label="按键" style="left:487px;top:134px"><svg class="cj" viewBox="-1 2 14 16" shape-rendering="crispEdges"><use href="#c0"/></svg><svg class="cj" viewBox="-1 2 14 16" shape-rendering="crispEdges"><use href="#c1"/></svg></div>
<div class="num" style="top:151px">6</div>
<div class="code" style="left:383px;top:151px"><span class="k">input</span> key3,<span class="c">//</span><span class="sp" style="width:28px"></span><span class="c">3</span></div>
<div class="cjr" role="img" aria-label="按键" style="left:487px;top:150px"><svg class="cj" viewBox="-1 2 14 16" shape-rendering="crispEdges"><use href="#c0"/></svg><svg class="cj" viewBox="-1 2 14 16" shape-rendering="crispEdges"><use href="#c1"/></svg></div>
<div class="num" style="top:167px">7</div>
<div class="code" style="left:383px;top:167px"><span class="k">output</span> [<span class="n">7</span>:<span class="n">0</span>] led,<span class="c">//LED</span><span class="sp" style="width:112px"></span></div>
<div class="cjr" role="img" aria-label="指示输入多少位数" style="left:559px;top:166px"><svg class="cj" viewBox="-1 2 14 16" shape-rendering="crispEdges"><use href="#c2"/></svg><svg class="cj" viewBox="-1 2 14 16" shape-rendering="crispEdges"><use href="#c3"/></svg><svg class="cj" viewBox="-1 2 14 16" shape-rendering="crispEdges"><use href="#c4"/></svg><svg class="cj" viewBox="-1 2 14 16" shape-rendering="crispEdges"><use href="#c5"/></svg><svg class="cj" viewBox="-1 2 14 16" shape-rendering="crispEdges"><use href="#c6"/></svg><svg class="cj" viewBox="-1 2 14 16" shape-rendering="crispEdges"><use href="#c7"/></svg><svg class="cj" viewBox="-1 2 14 16" shape-rendering="crispEdges"><use href="#c8"/></svg><svg class="cj" viewBox="-1 2 14 16" shape-rendering="crispEdges"><use href="#c9"/></svg></div>
<div class="num" style="top:183px">8</div>
<div class="code" style="left:383px;top:183px"><span class="k">output</span> [<span class="n">6</span>:<span class="n">0</span>]HEX0,<span class="c">//</span><span class="sp" style="width:42px"></span></div>
<div class="cjr" role="img" aria-label="数码管" style="left:535px;top:182px"><svg class="cj" viewBox="-1 2 14 16" shape-rendering="crispEdges"><use href="#c9"/></svg><svg class="cj" viewBox="-1 2 14 16" shape-rendering="crispEdges"><use href="#c10"/></svg><svg class="cj" viewBox="-1 2 14 16" shape-rendering="crispEdges"><use href="#c11"/></svg></div>
<div class="num" style="top:199px">9</div>
<div class="code" style="left:383px;top:199px"><span class="k">output</span> [<span class="n">6</span>:<span class="n">0</span>]HEX1,<span class="c">//</span><span class="sp" style="width:42px"></span></div>
<div class="cjr" role="img" aria-label="数码管" style="left:535px;top:198px"><svg class="cj" viewBox="-1 2 14 16" shape-rendering="crispEdges"><use href="#c9"/></svg><svg class="cj" viewBox="-1 2 14 16" shape-rendering="crispEdges"><use href="#c10"/></svg><svg class="cj" viewBox="-1 2 14 16" shape-rendering="crispEdges"><use href="#c11"/></svg></div>
<div class="num" style="top:215px">10</div>
<div class="code" style="left:383px;top:215px"><span class="k">output</span> [<span class="n">6</span>:<span class="n">0</span>]HEX2,<span class="c">//</span><span class="sp" style="width:42px"></span></div>
<div class="cjr" role="img" aria-label="数码管" style="left:535px;top:214px"><svg class="cj" viewBox="-1 2 14 16" shape-rendering="crispEdges"><use href="#c9"/></svg><svg class="cj" viewBox="-1 2 14 16" shape-rendering="crispEdges"><use href="#c10"/></svg><svg class="cj" viewBox="-1 2 14 16" shape-rendering="crispEdges"><use href="#c11"/></svg></div>
<div class="num" style="top:231px">11</div>
<div class="code" style="left:383px;top:231px"><span class="k">output</span> [<span class="n">6</span>:<span class="n">0</span>]HEX3<span class="c">//</span><span class="sp" style="width:42px"></span></div>
<div class="cjr" role="img" aria-label="数码管" style="left:527px;top:230px"><svg class="cj" viewBox="-1 2 14 16" shape-rendering="crispEdges"><use href="#c9"/></svg><svg class="cj" viewBox="-1 2 14 16" shape-rendering="crispEdges"><use href="#c10"/></svg><svg class="cj" viewBox="-1 2 14 16" shape-rendering="crispEdges"><use href="#c11"/></svg></div>
<div class="num" style="top:247px">12</div>
<div class="code" style="left:383px;top:247px">);</div>
<div class="num" style="top:263px">13</div>
<div class="num" style="top:279px">14</div>
<div class="code" style="left:383px;top:279px"><span class="k">wire</span> [<span class="n">2</span>:<span class="n">0</span>] state_out;<span class="c">//</span><span class="sp" style="width:56px"></span></div>
<div class="cjr" role="img" aria-label="当前状态" style="left:567px;top:278px"><svg class="cj" viewBox="-1 2 14 16" shape-rendering="crispEdges"><use href="#c12"/></svg><svg class="cj" viewBox="-1 2 14 16" shape-rendering="crispEdges"><use href="#c13"/></svg><svg class="cj" viewBox="-1 2 14 16" shape-rendering="crispEdges"><use href="#c14"/></svg><svg class="cj" viewBox="-1 2 14 16" shape-rendering="crispEdges"><use href="#c15"/></svg></div>
<div class="num" style="top:295px">15</div>
<div class="code" style="left:383px;top:295px"><span class="c">//</span><span class="sp" style="width:98px"></span></div>
<div class="cjr" role="img" aria-label="密码锁控制模块" style="left:399px;top:294px"><svg class="cj" viewBox="-1 2 14 16" shape-rendering="crispEdges"><use href="#c16"/></svg><svg class="cj" viewBox="-1 2 14 16" shape-rendering="crispEdges"><use href="#c10"/></svg><svg class="cj" viewBox="-1 2 14 16" shape-rendering="crispEdges"><use href="#c17"/></svg><svg class="cj" viewBox="-1 2 14 16" shape-rendering="crispEdges"><use href="#c18"/></svg><svg class="cj" viewBox="-1 2 14 16" shape-rendering="crispEdges"><use href="#c19"/></svg><svg class="cj" viewBox="-1 2 14 16" shape-rendering="crispEdges"><use href="#c20"/></svg><svg class="cj" viewBox="-1 2 14 16" shape-rendering="crispEdges"><use href="#c21"/></svg></div>
<div class="num" style="top:311px">16</div>
<div class="code" style="left:383px;top:311px">lock_statemachine i_lock_statemachine(</div>
<div class="num" style="top:327px">17</div>
<div class="code" style="left:383px;top:327px">. clk_50M(clk_50M),</div>
<div class="num" style="top:343px">18</div>
<div class="code" style="left:383px;top:343px">. key_0(key0),</div>
<div class="num" style="top:359px">19</div>
<div class="code" style="left:383px;top:359px">. key_1(key1),</div>
<div class="num" style="top:375px">20</div>
<div class="code" style="left:383px;top:375px">. key_2(key2),</div>
<div class="num" style="top:391px">21</div>
<div class="code" style="left:383px;top:391px">. key_3(key3),</div>
<div class="num" style="top:407px">22</div>
<div class="code" style="left:383px;top:407px">. led(led),</div>
<div class="num" style="top:423px">23</div>
<div class="code" style="left:383px;top:423px">. state_out(state_out)<span class="c">//</span><span class="sp" style="width:56px"></span></div>
<div class="cjr" role="img" aria-label="当前状态" style="left:575px;top:422px"><svg class="cj" viewBox="-1 2 14 16" shape-rendering="crispEdges"><use href="#c12"/></svg><svg class="cj" viewBox="-1 2 14 16" shape-rendering="crispEdges"><use href="#c13"/></svg><svg class="cj" viewBox="-1 2 14 16" shape-rendering="crispEdges"><use href="#c14"/></svg><svg class="cj" viewBox="-1 2 14 16" shape-rendering="crispEdges"><use href="#c15"/></svg></div>
<div class="num" style="top:439px">24</div>
<div class="code" style="left:383px;top:439px">);</div>
<div class="num" style="top:455px">25</div>
<div class="num" style="top:471px">26</div>
<div class="code" style="left:383px;top:471px"><span class="c">//</span><span class="sp" style="width:56px"></span></div>
<div class="cjr" role="img" aria-label="显示模块" style="left:399px;top:470px"><svg class="cj" viewBox="-1 2 14 16" shape-rendering="crispEdges"><use href="#c22"/></svg><svg class="cj" viewBox="-1 2 14 16" shape-rendering="crispEdges"><use href="#c3"/></svg><svg class="cj" viewBox="-1 2 14 16" shape-rendering="crispEdges"><use href="#c20"/></svg><svg class="cj" viewBox="-1 2 14 16" shape-rendering="crispEdges"><use href="#c21"/></svg></div>
<div class="num" style="top:487px">27</div>
<div class="code" style="left:383px;top:487px">display_HEX U_display_HEX</div>
<div class="num" style="top:503px">28</div>
<div class="code" style="left:383px;top:503px">(</div>
<div class="num" style="top:519px">29</div>
<div class="code" style="left:383px;top:519px">. clk_50M(clk_50M),</div>
<div class="num" style="top:535px">30</div>
<div class="code" style="left:383px;top:535px">. state_out(state_out),<span class="c">//</span><span class="sp" style="width:56px"></span></div>
<div class="cjr" role="img" aria-label="当前状态" style="left:583px;top:534px"><svg class="cj" viewBox="-1 2 14 16" shape-rendering="crispEdges"><use href="#c12"/></svg><svg class="cj" viewBox="-1 2 14 16" shape-rendering="crispEdges"><use href="#c13"/></svg><svg class="cj" viewBox="-1 2 14 16" shape-rendering="crispEdges"><use href="#c14"/></svg><svg class="cj" viewBox="-1 2 14 16" shape-rendering="crispEdges"><use href="#c15"/></svg></div>
<div class="num" style="top:551px">31</div>
<div class="code" style="left:383px;top:551px">. HEX0(HEX0),<span class="c">//</span><span class="sp" style="width:70px"></span></div>
<div class="cjr" role="img" aria-label="数码管段选" style="left:503px;top:550px"><svg class="cj" viewBox="-1 2 14 16" shape-rendering="crispEdges"><use href="#c9"/></svg><svg class="cj" viewBox="-1 2 14 16" shape-rendering="crispEdges"><use href="#c10"/></svg><svg class="cj" viewBox="-1 2 14 16" shape-rendering="crispEdges"><use href="#c11"/></svg><svg class="cj" viewBox="-1 2 14 16" shape-rendering="crispEdges"><use href="#c23"/></svg><svg class="cj" viewBox="-1 2 14 16" shape-rendering="crispEdges"><use href="#c24"/></svg></div>
<div class="num" style="top:567px">32</div>
<div class="code" style="left:383px;top:567px">. HEX1(HEX1),<span class="c">//</span><span class="sp" style="width:70px"></span></div>
<div class="cjr" role="img" aria-label="数码管段选" style="left:503px;top:566px"><svg class="cj" viewBox="-1 2 14 16" shape-rendering="crispEdges"><use href="#c9"/></svg><svg class="cj" viewBox="-1 2 14 16" shape-rendering="crispEdges"><use href="#c10"/></svg><svg class="cj" viewBox="-1 2 14 16" shape-rendering="crispEdges"><use href="#c11"/></svg><svg class="cj" viewBox="-1 2 14 16" shape-rendering="crispEdges"><use href="#c23"/></svg><svg class="cj" viewBox="-1 2 14 16" shape-rendering="crispEdges"><use href="#c24"/></svg></div>
<div class="num" style="top:583px">33</div>
<div class="code" style="left:383px;top:583px">. HEX2(HEX2),<span class="c">//</span><span class="sp" style="width:70px"></span></div>
<div class="cjr" role="img" aria-label="数码管段选" style="left:503px;top:582px"><svg class="cj" viewBox="-1 2 14 16" shape-rendering="crispEdges"><use href="#c9"/></svg><svg class="cj" viewBox="-1 2 14 16" shape-rendering="crispEdges"><use href="#c10"/></svg><svg class="cj" viewBox="-1 2 14 16" shape-rendering="crispEdges"><use href="#c11"/></svg><svg class="cj" viewBox="-1 2 14 16" shape-rendering="crispEdges"><use href="#c23"/></svg><svg class="cj" viewBox="-1 2 14 16" shape-rendering="crispEdges"><use href="#c24"/></svg></div>
<div class="num" style="top:599px">34</div>
<div class="code" style="left:383px;top:599px">. HEX3(HEX3) <span class="c">//</span><span class="sp" style="width:70px"></span></div>
<div class="cjr" role="img" aria-label="数码管段选" style="left:503px;top:598px"><svg class="cj" viewBox="-1 2 14 16" shape-rendering="crispEdges"><use href="#c9"/></svg><svg class="cj" viewBox="-1 2 14 16" shape-rendering="crispEdges"><use href="#c10"/></svg><svg class="cj" viewBox="-1 2 14 16" shape-rendering="crispEdges"><use href="#c11"/></svg><svg class="cj" viewBox="-1 2 14 16" shape-rendering="crispEdges"><use href="#c23"/></svg><svg class="cj" viewBox="-1 2 14 16" shape-rendering="crispEdges"><use href="#c24"/></svg></div>
<div class="num" style="top:615px">35</div>
<div class="code" style="left:383px;top:615px">);</div>
<div class="num" style="top:631px">36</div>
<div class="num" style="top:647px">37</div>
<div class="num" style="top:663px">38</div>
<div class="code" style="left:383px;top:663px"><span class="k">endmodule</span></div>
<div class="num" style="top:679px">39</div>
<div style="left:496px;top:293px;width:1px;height:16px;background:#000"></div>
<svg class="i" style="left:370px;top:69px" width="12" height="208" viewBox="0 0 12 208"><rect x="0.5" y="3.5" width="10" height="10" fill="#fff" stroke="#000"/><path d="M2 8.5h7" stroke="#000"/><path d="M5.5 16V200.5 H11" fill="none" stroke="#000"/></svg>
<svg class="i" style="left:370px;top:309px" width="12" height="160" viewBox="0 0 12 160"><rect x="0.5" y="3.5" width="10" height="10" fill="#fff" stroke="#000"/><path d="M2 8.5h7" stroke="#000"/><path d="M5.5 16V152.5 H11" fill="none" stroke="#000"/></svg>
<svg class="i" style="left:370px;top:501px" width="12" height="160" viewBox="0 0 12 160"><rect x="0.5" y="3.5" width="10" height="10" fill="#fff" stroke="#000"/><path d="M2 8.5h7" stroke="#000"/><path d="M5.5 16V152.5 H11" fill="none" stroke="#000"/></svg>
<div style="left:312px;top:751px;width:1012px;height:1px;background:#fbfbfb"></div>
<div style="left:312px;top:752px;width:1012px;height:16px;background:#eeeeee"></div>
<svg class="i" style="left:318px;top:756px" width="5" height="8" viewBox="0 0 5 8"><path d="M4.2 0.3V7.3L0.2 3.8Z" fill="url(#gArL)"/></svg>
<svg class="i" style="left:1313px;top:756px" width="5" height="8" viewBox="0 0 5 8"><path d="M0.8 0.3V7.3L4.8 3.8Z" fill="url(#gArR)"/></svg>
<div class="thumb" style="left:330px;top:752px;width:139px;height:15px;"></div>
<svg class="i" style="left:395px;top:756px" width="9" height="8" viewBox="0 0 9 8"><path d="M0.5 0v8M3.5 0v8M6.5 0v8" stroke="#4e4e4e" stroke-width="1"/><path d="M1.5 0v8M4.5 0v8M7.5 0v8" stroke="#fff" stroke-width="1" opacity=".85"/></svg>
<div style="left:1313px;top:752px;width:11px;height:16px;background:#eeeeee"></div>
<svg class="i" style="left:4.6px;top:63.6px" width="17" height="15" viewBox="0 0 17 15"><path d="M6.8 0.4L16.4 9.6L12.4 13.8H0.4Z" fill="url(#gPyr2)"/><path d="M6.8 0.4L12.6 13.8H0.4Z" fill="url(#gPyr)"/><path d="M6.8 0.4L0.4 13.8H12.6" fill="none" stroke="#4f74b8" stroke-width="1" opacity=".85"/><path d="M6.6 5V8M6.6 8L4.6 11M6.6 8L8.6 11" stroke="#2a48b0" stroke-width="1" fill="none"/><circle cx="6.6" cy="5" r=".9" fill="#e02040"/><circle cx="6.6" cy="11.3" r=".9" fill="#e02040"/><circle cx="4.3" cy="11.3" r=".8" fill="#2a48b0"/><circle cx="8.9" cy="11.3" r=".8" fill="#2a48b0"/></svg>
<svg class="i" style="left:9.5px;top:88.5px" width="7" height="7" viewBox="0 0 7 7"><path d="M6.5 0.8 V6.5 H0.8 Z" fill="#595959" stroke="#262626" stroke-width="1" stroke-linejoin="round"/></svg>
<svg class="i" style="left:26px;top:84px" width="14" height="17" viewBox="0 0 14 17"><rect x="0.5" y="0.5" width="13" height="10" fill="url(#gAbcS)" stroke="#8fb4ea"/><path d="M13.5 0.5V10.5H0.5" fill="none" stroke="#5f86c0"/><path d="M0.9 10.5V14.6Q2 16.6 3 14.6V10.5" fill="none" stroke="#3f62c4" stroke-width="1"/><text x="7" y="9" text-anchor="middle" font-family="Liberation Sans" font-size="9" fill="#141a24" textLength="13.2" lengthAdjust="spacingAndGlyphs">abc</text></svg>
<svg class="i" style="left:128px;top:82.5px" width="16" height="15" viewBox="0 0 16 15"><path d="M5.5 2V5.5M1.8 9V5.5H10.8V8" fill="none" stroke="#6a7a8a" stroke-width="1"/><rect x="3.6" y="0.5" width="3.8" height="1.8" fill="#e02050" stroke="#7a8aa0" stroke-width=".6"/><rect x="0.3" y="9" width="3.6" height="1.8" fill="#f2e060" stroke="#a0a070" stroke-width=".6"/><rect x="6.9" y="7.6" width="8" height="6.4" fill="#fff" stroke="#e0204c" stroke-width="1.3"/><rect x="8.7" y="9.5" width="4.4" height="2.6" fill="#5fb45f" stroke="#7a8aa0" stroke-width=".5"/></svg>
<svg class="i" style="left:46px;top:104px" width="14" height="17" viewBox="0 0 14 17"><rect x="0.5" y="0.5" width="13" height="10" fill="url(#gAbc)" stroke="#b4bccb"/><path d="M13.5 0.5V10.5H0.5" fill="none" stroke="#5a6f8c"/><path d="M0.9 10.5V14.6Q2 16.6 3 14.6V10.5" fill="none" stroke="#3f62c4" stroke-width="1"/><text x="7" y="9" text-anchor="middle" font-family="Liberation Sans" font-size="9" fill="#141a24" textLength="13.2" lengthAdjust="spacingAndGlyphs">abc</text></svg>
<svg class="i" style="left:46px;top:124px" width="14" height="17" viewBox="0 0 14 17"><rect x="0.5" y="0.5" width="13" height="10" fill="url(#gAbc)" stroke="#b4bccb"/><path d="M13.5 0.5V10.5H0.5" fill="none" stroke="#5a6f8c"/><path d="M0.9 10.5V14.6Q2 16.6 3 14.6V10.5" fill="none" stroke="#3f62c4" stroke-width="1"/><text x="7" y="9" text-anchor="middle" font-family="Liberation Sans" font-size="9" fill="#141a24" textLength="13.2" lengthAdjust="spacingAndGlyphs">abc</text></svg>
<svg class="i" style="left:11.6px;top:218.8px" width="17" height="15" viewBox="0 0 17 15"><path d="M6.8 0.4L16.4 9.6L12.4 13.8H0.4Z" fill="url(#gPyr2)"/><path d="M6.8 0.4L12.6 13.8H0.4Z" fill="url(#gPyr)"/><path d="M6.8 0.4L0.4 13.8H12.6" fill="none" stroke="#4f74b8" stroke-width="1" opacity=".85"/><path d="M6.6 5V8M6.6 8L4.6 11M6.6 8L8.6 11" stroke="#2a48b0" stroke-width="1" fill="none"/><circle cx="6.6" cy="5" r=".9" fill="#e02040"/><circle cx="6.6" cy="11.3" r=".9" fill="#e02040"/><circle cx="4.3" cy="11.3" r=".8" fill="#2a48b0"/><circle cx="8.9" cy="11.3" r=".8" fill="#2a48b0"/></svg>
<svg class="i" style="left:104px;top:218px" width="14" height="16" viewBox="0 0 14 16"><path d="M0.5 0.5H10L13.5 4V15.5H0.5Z" fill="url(#gDoc)" stroke="#5a6e9c"/><path d="M10 0.5V4H13.5" fill="#fff" stroke="#8a9ac0" stroke-width=".8"/><path d="M2 2.5H9M2 4.5H11M2 6.5H12M2 8.5H12M2 10.5H12M2 12.5H12" stroke="#1c2eb4" stroke-width="1"/></svg>
<svg class="i" style="left:169px;top:220px" width="11" height="12" viewBox="0 0 11 12"><rect x="5.5" y="0.5" width="5" height="5" fill="#9db9e8" stroke="#5f82c0"/><rect x="3" y="3.5" width="4.6" height="4.6" fill="#f5d640" stroke="#b89a20" stroke-width=".8"/><rect x="0.5" y="6.5" width="4.5" height="5" fill="#f4f7fd" stroke="#6f8ac0"/></svg>
<svg class="i" style="left:267px;top:219px" width="8" height="12" viewBox="0 0 8 12"><rect x="1" y="1" width="1.5" height="1.5" fill="#e03c10"/><rect x="3.5" y="3.5" width="1.5" height="1.5" fill="#f0a020"/><rect x="1" y="6" width="1.5" height="1.5" fill="#e03c10"/><rect x="3.5" y="8.5" width="1.5" height="1.5" fill="#e03c10"/></svg>
<svg class="i" style="left:49.6px;top:329.5px" width="6" height="10" viewBox="0 0 6 10"><path d="M0.5 0.9 V9.1 L5.3 5 Z" fill="#fff" stroke="#a6a6a6" stroke-width="1"/></svg>
<svg class="i" style="left:64.6px;top:327.6px" width="15" height="13" viewBox="0 0 15 13"><path d="M0.5 12.5V2.2L2 0.6H6.6L8.2 2.5H14.5V12.5Z" fill="url(#gFold)"/><path d="M0.5 12.5V2.2L2 0.6H6.6L8.2 2.5" fill="none" stroke="#93a7c6" stroke-width="1"/><path d="M8.2 2.5H14.5V12.5H0.5" fill="none" stroke="#2f4c74" stroke-width="1"/></svg>
<svg class="i" style="left:49.6px;top:349.5px" width="6" height="10" viewBox="0 0 6 10"><path d="M0.5 0.9 V9.1 L5.3 5 Z" fill="#fff" stroke="#a6a6a6" stroke-width="1"/></svg>
<svg class="i" style="left:64.6px;top:347.6px" width="15" height="13" viewBox="0 0 15 13"><path d="M0.5 12.5V2.2L2 0.6H6.6L8.2 2.5H14.5V12.5Z" fill="url(#gFold)"/><path d="M0.5 12.5V2.2L2 0.6H6.6L8.2 2.5" fill="none" stroke="#93a7c6" stroke-width="1"/><path d="M8.2 2.5H14.5V12.5H0.5" fill="none" stroke="#2f4c74" stroke-width="1"/></svg>
<svg class="i" style="left:49.6px;top:369.5px" width="6" height="10" viewBox="0 0 6 10"><path d="M0.5 0.9 V9.1 L5.3 5 Z" fill="#fff" stroke="#a6a6a6" stroke-width="1"/></svg>
<svg class="i" style="left:64.6px;top:367.6px" width="15" height="13" viewBox="0 0 15 13"><path d="M0.5 12.5V2.2L2 0.6H6.6L8.2 2.5H14.5V12.5Z" fill="url(#gFold)"/><path d="M0.5 12.5V2.2L2 0.6H6.6L8.2 2.5" fill="none" stroke="#93a7c6" stroke-width="1"/><path d="M8.2 2.5H14.5V12.5H0.5" fill="none" stroke="#2f4c74" stroke-width="1"/></svg>
<svg class="i" style="left:48.7px;top:390.6px" width="7" height="7" viewBox="0 0 7 7"><path d="M6.5 0.8 V6.5 H0.8 Z" fill="#595959" stroke="#262626" stroke-width="1" stroke-linejoin="round"/></svg>
<svg class="i" style="left:66.6px;top:387.6px" width="11" height="12" viewBox="0 0 11 12"><path d="M0.7 0.4V11.3L10.6 5.9Z" fill="url(#gPlay)"/><path d="M0.7 0.4V11.3L10.6 5.9" fill="none" stroke="#3b3f7c" stroke-width="0.9" opacity=".75"/></svg>
<svg class="i" style="left:4.2px;top:387.6px" width="16" height="13" viewBox="0 0 16 13"><path d="M1.6 6.6 L5.6 10.9 L14.4 1.6" fill="none" stroke="#48a248" stroke-width="3.3" stroke-linejoin="miter"/><path d="M1.9 6.3 L5.6 10.2 L14.1 1.5" fill="none" stroke="#74c874" stroke-width="1.8"/></svg>
<svg class="i" style="left:69.6px;top:409.5px" width="6" height="10" viewBox="0 0 6 10"><path d="M0.5 0.9 V9.1 L5.3 5 Z" fill="#fff" stroke="#a6a6a6" stroke-width="1"/></svg>
<svg class="i" style="left:86.6px;top:407.6px" width="11" height="12" viewBox="0 0 11 12"><path d="M0.7 0.4V11.3L10.6 5.9Z" fill="url(#gPlay)"/><path d="M0.7 0.4V11.3L10.6 5.9" fill="none" stroke="#3b3f7c" stroke-width="0.9" opacity=".75"/></svg>
<svg class="i" style="left:4.2px;top:407.6px" width="16" height="13" viewBox="0 0 16 13"><path d="M1.6 6.6 L5.6 10.9 L14.4 1.6" fill="none" stroke="#48a248" stroke-width="3.3" stroke-linejoin="miter"/><path d="M1.9 6.3 L5.6 10.2 L14.1 1.5" fill="none" stroke="#74c874" stroke-width="1.8"/></svg>
<svg class="i" style="left:69.6px;top:429.5px" width="6" height="10" viewBox="0 0 6 10"><path d="M0.5 0.9 V9.1 L5.3 5 Z" fill="#fff" stroke="#a6a6a6" stroke-width="1"/></svg>
<svg class="i" style="left:86.6px;top:427.6px" width="11" height="12" viewBox="0 0 11 12"><path d="M0.7 0.4V11.3L10.6 5.9Z" fill="url(#gPlay)"/><path d="M0.7 0.4V11.3L10.6 5.9" fill="none" stroke="#3b3f7c" stroke-width="0.9" opacity=".75"/></svg>
<svg class="i" style="left:4.2px;top:427.6px" width="16" height="13" viewBox="0 0 16 13"><path d="M1.6 6.6 L5.6 10.9 L14.4 1.6" fill="none" stroke="#48a248" stroke-width="3.3" stroke-linejoin="miter"/><path d="M1.9 6.3 L5.6 10.2 L14.1 1.5" fill="none" stroke="#74c874" stroke-width="1.8"/></svg>
<svg class="i" style="left:69.6px;top:449.5px" width="6" height="10" viewBox="0 0 6 10"><path d="M0.5 0.9 V9.1 L5.3 5 Z" fill="#fff" stroke="#a6a6a6" stroke-width="1"/></svg>
<svg class="i" style="left:86.6px;top:447.6px" width="11" height="12" viewBox="0 0 11 12"><path d="M0.7 0.4V11.3L10.6 5.9Z" fill="url(#gPlay)"/><path d="M0.7 0.4V11.3L10.6 5.9" fill="none" stroke="#3b3f7c" stroke-width="0.9" opacity=".75"/></svg>
<svg class="i" style="left:4.2px;top:447.6px" width="16" height="13" viewBox="0 0 16 13"><path d="M1.6 6.6 L5.6 10.9 L14.4 1.6" fill="none" stroke="#48a248" stroke-width="3.3" stroke-linejoin="miter"/><path d="M1.9 6.3 L5.6 10.2 L14.1 1.5" fill="none" stroke="#74c874" stroke-width="1.8"/></svg>
<svg class="i" style="left:69.6px;top:469.5px" width="6" height="10" viewBox="0 0 6 10"><path d="M0.5 0.9 V9.1 L5.3 5 Z" fill="#fff" stroke="#a6a6a6" stroke-width="1"/></svg>
<svg class="i" style="left:86.6px;top:467.6px" width="11" height="12" viewBox="0 0 11 12"><path d="M0.7 0.4V11.3L10.6 5.9Z" fill="url(#gPlay)"/><path d="M0.7 0.4V11.3L10.6 5.9" fill="none" stroke="#3b3f7c" stroke-width="0.9" opacity=".75"/></svg>
<svg class="i" style="left:4.2px;top:467.6px" width="16" height="13" viewBox="0 0 16 13"><path d="M1.6 6.6 L5.6 10.9 L14.4 1.6" fill="none" stroke="#48a248" stroke-width="3.3" stroke-linejoin="miter"/><path d="M1.9 6.3 L5.6 10.2 L14.1 1.5" fill="none" stroke="#74c874" stroke-width="1.8"/></svg>
<svg class="i" style="left:69.6px;top:489.5px" width="6" height="10" viewBox="0 0 6 10"><path d="M0.5 0.9 V9.1 L5.3 5 Z" fill="#fff" stroke="#a6a6a6" stroke-width="1"/></svg>
<svg class="i" style="left:86.6px;top:487.6px" width="11" height="12" viewBox="0 0 11 12"><path d="M0.7 0.4V11.3L10.6 5.9Z" fill="url(#gPlay)"/><path d="M0.7 0.4V11.3L10.6 5.9" fill="none" stroke="#3b3f7c" stroke-width="0.9" opacity=".75"/></svg>
<svg class="i" style="left:4.2px;top:487.6px" width="16" height="13" viewBox="0 0 16 13"><path d="M1.6 6.6 L5.6 10.9 L14.4 1.6" fill="none" stroke="#48a248" stroke-width="3.3" stroke-linejoin="miter"/><path d="M1.9 6.3 L5.6 10.2 L14.1 1.5" fill="none" stroke="#74c874" stroke-width="1.8"/></svg>
<svg class="i" style="left:63.2px;top:505.4px" width="17" height="18" viewBox="0 0 17 18"><path d="M8.5 15.9L1 8.4L8.5 16.9L16 8.4Z" fill="#000"/><path d="M8.5 0.6L16.3 8.2L8.5 15.8L0.7 8.2Z" fill="url(#gDia)" stroke="#4f78c8" stroke-width=".6"/><path d="M2.2 9.8l1 1 1 0 0 1 1 0 0 1 1 0 0 1 1 0 0 1 1.3 0 1.3 0 0 -1 1 0 0 -1 1 0 0 -1 1 0 0 -1 1 0 0 -1 1 0L8.5 16.6Z" fill="#0a0a14"/><path d="M2 0.5V5.5L5 8" fill="none" stroke="#e0204c" stroke-width="1.2"/><path d="M4.5 1.5V6L6.8 8.4M6.6 2V6.5L8.4 8.6M8.6 3.2V8.6M10.6 4.6V9" fill="none" stroke="#2238b8" stroke-width="1"/><path d="M5.6 3V7.5M7.7 4V8.5M9.7 5V9" stroke="#fff" stroke-width=".9"/></svg>
<svg class="i" style="left:48.7px;top:530.6px" width="7" height="7" viewBox="0 0 7 7"><path d="M6.5 0.8 V6.5 H0.8 Z" fill="#595959" stroke="#262626" stroke-width="1" stroke-linejoin="round"/></svg>
<svg class="i" style="left:63.8px;top:527.4px" width="16" height="13" viewBox="0 0 16 13"><path d="M0.5 11.5V1.6L1.6 0.5H5.6L7 2H11.5V4.5H4.5L0.9 11.5Z" fill="#f6dd8a" stroke="#8a7a56" stroke-width="1"/><path d="M4.2 4.5H15.6L12.4 12H1Z" fill="url(#gFold)" stroke="#6a5226" stroke-width="1"/></svg>
<svg class="i" style="left:69.6px;top:549.5px" width="6" height="10" viewBox="0 0 6 10"><path d="M0.5 0.9 V9.1 L5.3 5 Z" fill="#fff" stroke="#a6a6a6" stroke-width="1"/></svg>
<svg class="i" style="left:84.6px;top:547.6px" width="15" height="13" viewBox="0 0 15 13"><path d="M0.5 12.5V2.2L2 0.6H6.6L8.2 2.5H14.5V12.5Z" fill="url(#gFold)"/><path d="M0.5 12.5V2.2L2 0.6H6.6L8.2 2.5" fill="none" stroke="#93a7c6" stroke-width="1"/><path d="M8.2 2.5H14.5V12.5H0.5" fill="none" stroke="#2f4c74" stroke-width="1"/></svg>
<div style="left:41px;top:564px;width:248px;height:8px;overflow:hidden">
<svg class="i" style="left:43.6px;top:3.8px" width="15" height="13" viewBox="0 0 15 13"><path d="M0.5 12.5V2.2L2 0.6H6.6L8.2 2.5H14.5V12.5Z" fill="url(#gFold)"/><path d="M0.5 12.5V2.2L2 0.6H6.6L8.2 2.5" fill="none" stroke="#93a7c6" stroke-width="1"/><path d="M8.2 2.5H14.5V12.5H0.5" fill="none" stroke="#2f4c74" stroke-width="1"/></svg>
<svg class="i" style="left:28.6px;top:5.7px" width="6" height="10" viewBox="0 0 6 10"><path d="M0.5 0.9 V9.1 L5.3 5 Z" fill="#fff" stroke="#a6a6a6" stroke-width="1"/></svg>
</div>
<span class="t" style="left:163px;top:618.5px;font-style:italic;font-size:16px;line-height:16px;height:16px;color:#4463bf;transform:scaleX(.76);transform-origin:0 0">%</span>
<svg class="i" style="left:262.4px;top:620.4px" width="11" height="13" viewBox="0 0 11 13"><ellipse cx="5.5" cy="1.6" rx="1.5" ry="1.2" fill="none" stroke="#6f8fd0" stroke-width=".9"/><circle cx="5.5" cy="7.2" r="5" fill="url(#gClk)"/><path d="M5.2 4.6V8.2L6.2 9.2" fill="none" stroke="#2a48c0" stroke-width="1.1"/></svg>
<svg class="i" style="left:322.4px;top:21.6px" width="17" height="18" viewBox="0 0 17 18"><path d="M8.5 15.9L1 8.4L8.5 16.9L16 8.4Z" fill="#000"/><path d="M8.5 0.6L16.3 8.2L8.5 15.8L0.7 8.2Z" fill="url(#gDia)" stroke="#4f78c8" stroke-width=".6"/><path d="M2.2 9.8l1 1 1 0 0 1 1 0 0 1 1 0 0 1 1 0 0 1 1.3 0 1.3 0 0 -1 1 0 0 -1 1 0 0 -1 1 0 0 -1 1 0 0 -1 1 0L8.5 16.6Z" fill="#0a0a14"/><path d="M5.2 0.5H10.4L12 2.1V8.6H5.2Z" fill="#e6edfd" stroke="#f8faff" stroke-width=".7"/><path d="M6 1.2H10V2.8H11.4V8H6Z" fill="url(#gBlu)"/><rect x="10.2" y="0.7" width="1.7" height="1.7" fill="#fff" stroke="#8a9cc8" stroke-width=".5"/></svg>
<svg class="i" style="left:858.6px;top:20.2px" width="17" height="18" viewBox="0 0 17 18"><path d="M8.5 15.9L1 8.4L8.5 16.9L16 8.4Z" fill="#000"/><path d="M8.5 0.6L16.3 8.2L8.5 15.8L0.7 8.2Z" fill="url(#gDia)" stroke="#4f78c8" stroke-width=".6"/><path d="M2.2 9.8l1 1 1 0 0 1 1 0 0 1 1 0 0 1 1 0 0 1 1.3 0 1.3 0 0 -1 1 0 0 -1 1 0 0 -1 1 0 0 -1 1 0 0 -1 1 0L8.5 16.6Z" fill="#0a0a14"/><text x="9.3" y="11.2" text-anchor="middle" font-family="Liberation Sans" font-size="9.8" font-weight="bold" fill="#f5a400" textLength="16.5" lengthAdjust="spacingAndGlyphs">abc</text></svg>
<svg class="i" style="left:314.6px;top:45.6px" width="4" height="20" viewBox="0 0 4 20"><path d="M0.4 2.6 L2.6 0.8" stroke="#b9b9b9" stroke-width="1.1"/><path d="M1 3.4 L3.2 1.6" stroke="#fff" stroke-width=".8"/><path d="M0.4 6.6 L2.6 4.8" stroke="#b9b9b9" stroke-width="1.1"/><path d="M1 7.4 L3.2 5.6" stroke="#fff" stroke-width=".8"/><path d="M0.4 10.6 L2.6 8.8" stroke="#b9b9b9" stroke-width="1.1"/><path d="M1 11.4 L3.2 9.6" stroke="#fff" stroke-width=".8"/><path d="M0.4 14.6 L2.6 12.8" stroke="#b9b9b9" stroke-width="1.1"/><path d="M1 15.4 L3.2 13.6" stroke="#fff" stroke-width=".8"/><path d="M0.4 18.6 L2.6 16.8" stroke="#b9b9b9" stroke-width="1.1"/><path d="M1 19.4 L3.2 17.6" stroke="#fff" stroke-width=".8"/></svg>
<svg class="i" style="left:323px;top:46px" width="18" height="18" viewBox="0 0 18 18"><rect x="1.3" y="1.2" width="15.4" height="11.3" fill="url(#gLn)"/><rect x="1" y="1" width="16" height="2" fill="#1b2f9e"/><path d="M1.2 3V12.6" stroke="#8fa4dc" stroke-width=".8"/><path d="M16.8 3V12.6H1" fill="none" stroke="#44527c" stroke-width="1"/><rect x="2.2" y="6.2" width="6.4" height="5.4" fill="#d9dce0"/><rect x="2.2" y="6.2" width="6.4" height="1.2" fill="#8d939b"/><rect x="3.4" y="8.6" width="1.2" height="2" fill="#2a2f3a"/><rect x="5.6" y="8.6" width="2" height="2" fill="#4a4f58"/><path d="M7.2 5.8Q7.4 4.4 9 4.4H11.8Q12.6 4.4 12.6 5.4V9" fill="none" stroke="#d81e4a" stroke-width="1.2"/><path d="M10 8.2H15.2L12.6 11.4Z" fill="#d81e4a"/><rect x="7.5" y="10.4" width="7.2" height="6.2" fill="#fbfcff" stroke="#2c4488" stroke-width=".9"/><rect x="7.1" y="10" width="8" height="1.7" fill="#2a46b4"/><rect x="9" y="13" width="1.1" height="2.1" fill="#1a1f2a"/><rect x="11.2" y="13" width="2" height="2.1" fill="#1a1f2a"/></svg>
<svg class="i" style="left:352.8px;top:47.6px" width="16.0" height="14.0" viewBox="0 0 16 14"><path d="M3.2 0.6H5.4V2.2L6.6 3.6V6.2H9.4V3.6L10.6 2.2V0.6H12.8V2.2L14 3.6 15.4 7.6V13.4H9.4V8.6H6.6V13.4H0.6V7.6L2 3.6 3.2 2.2Z" fill="url(#gBin)" stroke="#4a4a4a" stroke-width=".9" stroke-linejoin="round"/><path d="M0.8 8.4H6.4M9.6 8.4H15.2M2.4 3.8H6.2M9.8 3.8H13.6" stroke="#3c3c3c" stroke-width=".8"/><rect x="1.6" y="9.2" width="3" height="3.6" fill="#fff" opacity=".85"/><rect x="10.6" y="9.2" width="3" height="3.6" fill="#fff" opacity=".85"/></svg>
<svg class="i" style="left:375px;top:46px" width="18" height="18" viewBox="0 0 18 18"><text x="0.4" y="8.8" font-family="Liberation Sans" font-weight="bold" font-size="10.5" fill="#1450a8">A</text><text x="10.6" y="17" font-family="Liberation Sans" font-weight="bold" font-size="9.5" fill="#66707a">B</text><path d="M1.6 10Q1.6 15.2 8 15.2" fill="none" stroke="#2a50d0" stroke-width="1.4" stroke-dasharray="1.2 1.3"/><path d="M7.6 12.6L11 15.2L7.6 17.8Z" fill="#2a50d0"/><path d="M10.2 9.6Q8.6 5.6 12 2.6" fill="none" stroke="#2a50d0" stroke-width="1.3" stroke-dasharray="1.2 1.3"/><path d="M10.6 1H13.8V4.2" fill="none" stroke="#2a50d0" stroke-width="1.2" stroke-dasharray="1.2 1"/></svg>
<svg class="i" style="left:399px;top:46px" width="17" height="18" viewBox="0 0 17 18"><path d="M1.6 3.9H11.4" stroke="#2a46c8" stroke-width="2.2"/><path d="M10.4 0.6L15.6 3.9L10.4 7.2Z" fill="#1f38b0"/><path d="M2.2 3.2H10" stroke="#7f9cf0" stroke-width=".7"/><text x="0.6" y="15.6" font-family="Liberation Sans" font-weight="bold" font-size="11" fill="#5a7090" textLength="10.6" lengthAdjust="spacingAndGlyphs">{ }</text></svg>
<svg class="i" style="left:427.6px;top:46px" width="17" height="17" viewBox="0 0 17 17"><path d="M8 1.4V16.6" stroke="#2a3f6a" stroke-width="1.1" stroke-dasharray="1.1 1.6"/><path d="M8.6 4.2H16.6M8.6 12.4H16.6M8.6 14.6H9.8" stroke="#1f3a66" stroke-width="1"/><path d="M8.8 6.9H15.4M8.8 9.9H13.4" stroke="#1f3a66" stroke-width="2"/><path d="M2.4 4.2H6M2.4 12.4H6M2.4 14.6H6" stroke="#8fa4c8" stroke-width="1"/><path d="M0.4 8.4H5.4" stroke="#2a50d8" stroke-width="1.3"/><path d="M3.2 5.8L6 8.4L3.2 11" fill="none" stroke="#2a50d8" stroke-width="1.3"/></svg>
<svg class="i" style="left:450.6px;top:46px" width="17" height="17" viewBox="0 0 17 17"><path d="M8 1.4V16.6" stroke="#2a3f6a" stroke-width="1.1" stroke-dasharray="1.1 1.6"/><path d="M8.6 4.2H16.6M8.6 12.4H16.6M8.6 14.6H9.8" stroke="#1f3a66" stroke-width="1"/><path d="M8.8 6.9H15.4M8.8 9.9H13.4" stroke="#1f3a66" stroke-width="2"/><path d="M2.4 4.2H6M2.4 12.4H6M2.4 14.6H6" stroke="#8fa4c8" stroke-width="1"/><path d="M1 8.4H6" stroke="#2a50d8" stroke-width="1.3"/><path d="M3.2 5.8L0.4 8.4L3.2 11" fill="none" stroke="#2a50d8" stroke-width="1.3"/></svg>
<svg class="i" style="left:482px;top:46px" width="12" height="18" viewBox="0 0 12 18"><g transform="translate(0.8,2.6)"><path d="M1.6 4.2H7.4L10.2 7V14.4H1.6Z" fill="url(#gBlu)" stroke="#24405e" stroke-width="1"/><path d="M7.4 4.2V7H10.2" fill="#fff" stroke="#5a7090" stroke-width=".7"/><path d="M0.2 9.8V3.4Q0.4 0.5 3.8 0.5H5.2Q6.6 0.8 6.7 3V10.4L5.2 8.4L3.6 10.8V5L1.8 10.6Z" fill="url(#gBm)"/><path d="M0.6 3.6Q0.9 0.9 4 0.8H5.8Q8.6 1.1 9.2 3.8" fill="none" stroke="#0c4a12" stroke-width="1.2"/><path d="M3.6 4.6V10.2" stroke="#e4f6e4" stroke-width=".8" opacity=".9"/></g></svg>
<svg class="i" style="left:502px;top:46px" width="18" height="18" viewBox="0 0 18 18"><g transform="translate(1.4,2.6)"><path d="M1.6 4.2H7.4L10.2 7V14.4H1.6Z" fill="url(#gBlu)" stroke="#24405e" stroke-width="1"/><path d="M7.4 4.2V7H10.2" fill="#fff" stroke="#5a7090" stroke-width=".7"/><path d="M0.2 9.8V3.4Q0.4 0.5 3.8 0.5H5.2Q6.6 0.8 6.7 3V10.4L5.2 8.4L3.6 10.8V5L1.8 10.6Z" fill="url(#gBm)"/><path d="M0.6 3.6Q0.9 0.9 4 0.8H5.8Q8.6 1.1 9.2 3.8" fill="none" stroke="#0c4a12" stroke-width="1.2"/><path d="M3.6 4.6V10.2" stroke="#e4f6e4" stroke-width=".8" opacity=".9"/></g><path d="M9.6 5Q10 1.6 13 1.6Q15.4 1.8 15.4 5" fill="none" stroke="#2a55d8" stroke-width="1.3"/><path d="M12.9 4.6H17.6L15.3 7.6Z" fill="#2a55d8"/></svg>
<svg class="i" style="left:525px;top:46px" width="18" height="18" viewBox="0 0 18 18"><g transform="translate(6.8,2.6)"><path d="M1.6 4.2H7.4L10.2 7V14.4H1.6Z" fill="url(#gBlu)" stroke="#24405e" stroke-width="1"/><path d="M7.4 4.2V7H10.2" fill="#fff" stroke="#5a7090" stroke-width=".7"/><path d="M0.2 9.8V3.4Q0.4 0.5 3.8 0.5H5.2Q6.6 0.8 6.7 3V10.4L5.2 8.4L3.6 10.8V5L1.8 10.6Z" fill="url(#gBm)"/><path d="M0.6 3.6Q0.9 0.9 4 0.8H5.8Q8.6 1.1 9.2 3.8" fill="none" stroke="#0c4a12" stroke-width="1.2"/><path d="M3.6 4.6V10.2" stroke="#e4f6e4" stroke-width=".8" opacity=".9"/></g><path d="M8.4 5Q8 1.6 5 1.6Q2.6 1.8 2.6 5" fill="none" stroke="#2a55d8" stroke-width="1.3"/><path d="M0.4 4.6H5.1L2.7 7.6Z" fill="#2a55d8"/></svg>
<svg class="i" style="left:548px;top:46px" width="18" height="18" viewBox="0 0 18 18"><g transform="translate(0.6,2.6)"><path d="M1.6 4.2H7.4L10.2 7V14.4H1.6Z" fill="url(#gBlu)" stroke="#24405e" stroke-width="1"/><path d="M7.4 4.2V7H10.2" fill="#fff" stroke="#5a7090" stroke-width=".7"/><path d="M0.2 9.8V3.4Q0.4 0.5 3.8 0.5H5.2Q6.6 0.8 6.7 3V10.4L5.2 8.4L3.6 10.8V5L1.8 10.6Z" fill="url(#gBm)"/><path d="M0.6 3.6Q0.9 0.9 4 0.8H5.8Q8.6 1.1 9.2 3.8" fill="none" stroke="#0c4a12" stroke-width="1.2"/><path d="M3.6 4.6V10.2" stroke="#e4f6e4" stroke-width=".8" opacity=".9"/></g><path d="M9.6 9.8l6.4 6.4M16.0 9.8l-6.4 6.4" stroke="#f0545a" stroke-width="2.3" fill="none"/></svg>
<svg class="i" style="left:571px;top:46px" width="18" height="18" viewBox="0 0 18 18"><path d="M8.4 1H13.4L16 3.6V11H8.4Z" fill="url(#gBlu)" stroke="#9ab0d8" stroke-width=".8"/><g transform="translate(0.8,2.6)"><path d="M1.6 4.2H7.4L10.2 7V14.4H1.6Z" fill="url(#gBlu)" stroke="#24405e" stroke-width="1"/><path d="M7.4 4.2V7H10.2" fill="#fff" stroke="#5a7090" stroke-width=".7"/><path d="M0.2 9.8V3.4Q0.4 0.5 3.8 0.5H5.2Q6.6 0.8 6.7 3V10.4L5.2 8.4L3.6 10.8V5L1.8 10.6Z" fill="url(#gBm)"/><path d="M0.6 3.6Q0.9 0.9 4 0.8H5.8Q8.6 1.1 9.2 3.8" fill="none" stroke="#0c4a12" stroke-width="1.2"/><path d="M3.6 4.6V10.2" stroke="#e4f6e4" stroke-width=".8" opacity=".9"/></g><path d="M9.8 9.8l6.4 6.4M16.200000000000003 9.8l-6.4 6.4" stroke="#f0545a" stroke-width="2.3" fill="none"/></svg>
<svg class="i" style="left:604px;top:46px" width="10" height="18" viewBox="0 0 10 18"><path d="M6.4 5V12.6Q6.3 14.2 4.9 14.2Q3.5 14.2 3.4 12.6V4.4Q3.6 1.6 5.4 1.6Q7.8 1.6 8 4.4V13Q7.8 16.2 4.8 16.2Q1.6 16.2 1.4 13V5" fill="none" stroke="#2c4a72" stroke-width="1.3"/></svg>
<svg class="i" style="left:624px;top:46px" width="16" height="18" viewBox="0 0 16 18"><path d="M2.4 2.8H11.6Q13.8 3 13 5L11 6.2L14.2 13.6Q14.6 15.8 12.4 15.8H3.4Q1.2 15.4 2.4 13.4L4.2 12.6L1.4 5Q1 3 2.4 2.8Z" fill="url(#gScr)" stroke="#6a3a20" stroke-width="1"/><path d="M2.6 3.4H11.8" stroke="#f0e2c0" stroke-width=".9"/><path d="M4.4 12.8H13.2" stroke="#5a3018" stroke-width=".8"/></svg>
<svg class="i" style="left:652px;top:46px" width="18" height="18" viewBox="0 0 18 18"><path d="M3.4 1.6H12.6L16.2 5V16.4H3.4Z" fill="url(#gDoc)" stroke="#7f96cc" stroke-width=".9"/><path d="M12.6 1.6V5H16.2" fill="#fff" stroke="#8aa0d0" stroke-width=".7"/><path d="M0.8 1V8.6L7 4.8Z" fill="url(#gPlay)" stroke="#3b3f7c" stroke-width=".6"/><path d="M3.6 9.6L7.4 13.8L15.6 4.6" fill="none" stroke="#3a66e0" stroke-width="2.4"/><path d="M3.9 9.4L7.4 13.2L15.2 4.6" fill="none" stroke="#7fa4f4" stroke-width=".9"/></svg>
<div style="left:679px;top:45px;width:23px;height:21px;border:1px solid #6c6c6c;border-radius:3.5px;background:linear-gradient(#d2d2d2,#e2e2e2 40%,#e8e8e8);box-shadow:inset 1px 1px 1px rgba(0,0,0,.2)"></div>
<span class="t" style="left:679px;width:23px;text-align:center;top:47.5px;font-size:9px;line-height:8.6px;height:18px;color:#1f3a5c;white-space:normal;letter-spacing:-.1px">267 268</span>
<span class="t" style="left:705.4px;top:49px;font-size:12px;color:#2a49b8;letter-spacing:-.5px">ab<span style="color:#9a9ea6">/</span></span>
<div style="left:735px;top:47px;width:1px;height:16px;background:#2a4a9a"></div>
<svg class="i" style="left:751px;top:46px" width="16" height="18" viewBox="0 0 16 18"><path d="M0.6 6.8H10" stroke="#2a46c8" stroke-width="2.2"/><path d="M9.2 3.6L14.4 6.8L9.2 10Z" fill="#1f38b0"/><path d="M1 6H9" stroke="#7f9cf0" stroke-width=".7"/><path d="M0.6 13.4H14" stroke="#1f2f5a" stroke-width="1.1" stroke-dasharray="1.1 1.7"/></svg>
<svg class="i" style="left:773.4px;top:46.4px" width="17" height="17" viewBox="0 0 17 17"><rect x="0.9" y="0.9" width="15.2" height="15.2" fill="url(#gLn)" stroke="#7f9ad8" stroke-width=".9"/><path d="M16.1 1V16.1H1" fill="none" stroke="#2f4c8c" stroke-width="1"/><path d="M2.6 3.2H4M5.4 3.2H14.2M11.2 10.2H14.2M6.6 13.6H14.2" stroke="#101418" stroke-width="1.4"/><path d="M7.4 5.6H14.2M7.4 7.6H14.2" stroke="#b9bdb4" stroke-width="1"/></svg>
<svg class="i" style="left:796.4px;top:46.4px" width="17" height="17" viewBox="0 0 17 17"><rect x="0.9" y="0.9" width="15.2" height="15.2" fill="url(#gLn)" stroke="#7f9ad8" stroke-width=".9"/><path d="M16.1 1V16.1H1" fill="none" stroke="#2f4c8c" stroke-width="1"/><path d="M2.6 3.2H4M5.4 3.2H14.2M11.2 10.2H14.2M6.6 13.6H14.2" stroke="#101418" stroke-width="1.4"/><path d="M7.4 5.6H14.2M7.4 7.6H14.2" stroke="#b9bdb4" stroke-width="1"/><path d="M1 3.4V0.8H3.6" fill="none" stroke="#2a55d8" stroke-width="1.4"/><path d="M2 1.6Q7.6 1 7 5.2Q6.6 7.6 4.8 9.4" fill="none" stroke="#2a55d8" stroke-width="1.2"/></svg>
<svg class="i" style="left:820px;top:46px" width="16" height="18" viewBox="0 0 16 18"><rect x="1" y="2.2" width="14" height="4.6" fill="#fff" stroke="#3f6ce0" stroke-width="1.1"/><rect x="2.6" y="4" width="1.2" height="1.2" fill="#223"/><rect x="5" y="4" width="2" height="1.2" fill="#223"/><rect x="8" y="4" width="5.4" height="1.2" fill="#f08a18"/><path d="M1 7.6H15V15.6H1Z" fill="url(#gBlu)" stroke="#a9bce8" stroke-width=".7"/><path d="M15 7.6V15.6H1" fill="none" stroke="#24406a" stroke-width="1"/><path d="M3 9.4H5.4M3 11.6H10.4M3 13.6H12.6" stroke="#2c4a72" stroke-width="1.1"/></svg>
<div style="left:0;top:0;width:180px;height:17px;overflow:hidden">
<svg class="i" style="left:3.5px;top:-1px" width="4" height="16" viewBox="0 0 4 16"><path d="M0.4 2.6 L2.6 0.8" stroke="#b9b9b9" stroke-width="1.1"/><path d="M1 3.4 L3.2 1.6" stroke="#fff" stroke-width=".8"/><path d="M0.4 6.6 L2.6 4.8" stroke="#b9b9b9" stroke-width="1.1"/><path d="M1 7.4 L3.2 5.6" stroke="#fff" stroke-width=".8"/><path d="M0.4 10.6 L2.6 8.8" stroke="#b9b9b9" stroke-width="1.1"/><path d="M1 11.4 L3.2 9.6" stroke="#fff" stroke-width=".8"/><path d="M0.4 14.6 L2.6 12.8" stroke="#b9b9b9" stroke-width="1.1"/><path d="M1 15.4 L3.2 13.6" stroke="#fff" stroke-width=".8"/></svg>
<div style="left:10px;top:-8px;width:23px;height:23px;border:1px solid #6a6a6a;border-radius:3.5px;background:linear-gradient(90deg,#d8d8d8,#f4f4f4 25%,#f6f6f6 75%,#dcdcdc)"></div>
<div style="left:79px;top:-8px;width:23px;height:23px;border:1px solid #6a6a6a;border-radius:3.5px;background:linear-gradient(90deg,#d8d8d8,#f4f4f4 25%,#f6f6f6 75%,#dcdcdc)"></div>
<div style="left:102.5px;top:-8px;width:23px;height:23px;border:1px solid #6a6a6a;border-radius:3.5px;background:linear-gradient(90deg,#d8d8d8,#f4f4f4 25%,#f6f6f6 75%,#dcdcdc)"></div>
<div style="left:148px;top:-8px;width:23px;height:23px;border:1px solid #6a6a6a;border-radius:3.5px;background:linear-gradient(90deg,#d8d8d8,#f4f4f4 25%,#f6f6f6 75%,#dcdcdc)"></div>
<svg class="i" style="left:13px;top:-4px" width="18" height="18" viewBox="0 0 18 18"><path d="M2.2 3.4L15.8 17M15.8 3.4L2.2 17" stroke="#ff4a84" stroke-width="1.2" stroke-dasharray="2.4 .9"/><path d="M9.4 2.6L14.2 9L9.4 14.4L4.6 9Z" fill="url(#gDia)"/><path d="M4.6 9.4L9.4 14.4L14.2 9.4L9.4 15.8Z" fill="#111"/><circle cx="2.4" cy="9.6" r=".8" fill="#ff2a6a"/><circle cx="16.4" cy="9.6" r=".8" fill="#ff2a6a"/><circle cx="9.4" cy="17.6" r=".8" fill="#ff2a6a"/></svg>
<svg class="i" style="left:35.6px;top:-2.2px" width="16.0" height="14.0" viewBox="0 0 16 14"><path d="M3.2 0.6H5.4V2.2L6.6 3.6V6.2H9.4V3.6L10.6 2.2V0.6H12.8V2.2L14 3.6 15.4 7.6V13.4H9.4V8.6H6.6V13.4H0.6V7.6L2 3.6 3.2 2.2Z" fill="url(#gBin)" stroke="#4a4a4a" stroke-width=".9" stroke-linejoin="round"/><path d="M0.8 8.4H6.4M9.6 8.4H15.2M2.4 3.8H6.2M9.8 3.8H13.6" stroke="#3c3c3c" stroke-width=".8"/><rect x="1.6" y="9.2" width="3" height="3.6" fill="#fff" opacity=".85"/><rect x="10.6" y="9.2" width="3" height="3.6" fill="#fff" opacity=".85"/></svg>
<svg class="i" style="left:35px;top:-6px" width="10" height="10" viewBox="0 0 10 10"><path d="M1 2L5 8L9 2Z" fill="url(#gDia)"/><path d="M1.6 3.2L5 8.4L8.4 3.2L5 9.6Z" fill="#111"/></svg>
<svg class="i" style="left:58px;top:-4px" width="18" height="18" viewBox="0 0 18 18"><rect x="1.4" y="0" width="14.6" height="16" fill="url(#gBlu)" stroke="#3c62b4" stroke-width="1"/><rect x="5" y="-1" width="2.6" height="3.6" fill="#f08a18"/><path d="M15.6 -2Q8 4 2.8 15.6" fill="none" stroke="#1a2fae" stroke-width="3.2"/><path d="M14.6 -1Q8.4 5 4.6 12.6" fill="none" stroke="#c9d8ff" stroke-width="1"/></svg>
<svg class="i" style="left:81px;top:-4px" width="20" height="19" viewBox="0 0 20 19"><path d="M7 -1H18.4V15.6L16.8 17.4H7Z" fill="url(#gFold)" stroke="#3a5c9c" stroke-width="1"/><path d="M16.8 17.4V15.6H18.4Z" fill="#fff" stroke="#3a5c9c" stroke-width=".8"/><rect x="4.4" y="-1" width="4" height="4.2" rx="1" fill="#6fb86f" stroke="#2c4a72" stroke-width="1"/><path d="M4 4.6Q6 7 9 5L11 7.4L8 9V17" fill="none" stroke="#3a5c9c" stroke-width="1.2"/><path d="M8.4 9L12 6.4" stroke="#7f9acc" stroke-width="1.4"/></svg>
<svg class="i" style="left:105px;top:-4px" width="18" height="19" viewBox="0 0 18 19"><rect x="1.2" y="-1" width="15.4" height="8" fill="#e4ecff" stroke="#2c4468" stroke-width="1.1"/><rect x="2" y="0" width="8.4" height="6" fill="#5cb85c"/><rect x="1.2" y="9.4" width="15.4" height="5.2" fill="#eaf0ff" stroke="#2c4468" stroke-width="1.1"/><rect x="2" y="10.2" width="5.6" height="3.6" fill="#5cb85c"/><path d="M1 17.4H17" stroke="#1a2fae" stroke-width="1.6"/><path d="M1 16.2H17" stroke="#3a5ae0" stroke-width="1" stroke-dasharray="1 1"/></svg>
<svg class="i" style="left:127px;top:-4px" width="18" height="18" viewBox="0 0 18 18"><path d="M6 -1L11 0.5L10 3L14 5.4L15.4 4L16.6 9.6L10.6 11.4L11.8 9.4L6.6 5.6Z" fill="#e8285c"/><path d="M7.6 0.6L11 2.4" stroke="#ff9ab8" stroke-width="1"/><path d="M1.2 10.6L6.4 7.8L6.8 10.2Q8.6 13.4 12.8 13.2L10.4 16.4Q5.6 16.8 4 12.8L2.6 13.6Z" fill="#5f8fd8"/><path d="M6 16Q9 17.6 12.8 13.4" fill="none" stroke="#2c4a80" stroke-width="1"/></svg>
<svg class="i" style="left:150px;top:-4px" width="20" height="19" viewBox="0 0 20 19"><rect x="5" y="-2" width="11.4" height="19" fill="url(#gBlu)" stroke="#3a5488" stroke-width="1.1"/><path d="M7.4 0.2H12M7.4 2.8H12M7.4 5.4H12" stroke="#1f2f5a" stroke-width="1.3"/><path d="M5.6 9L9.4 13.2L18 3.6" fill="none" stroke="#3f9a3f" stroke-width="3.6"/><path d="M5.9 8.8L9.4 12.6L17.6 3.6" fill="none" stroke="#6cc46c" stroke-width="1.7"/></svg>
</div>
</div>
</body></html>
